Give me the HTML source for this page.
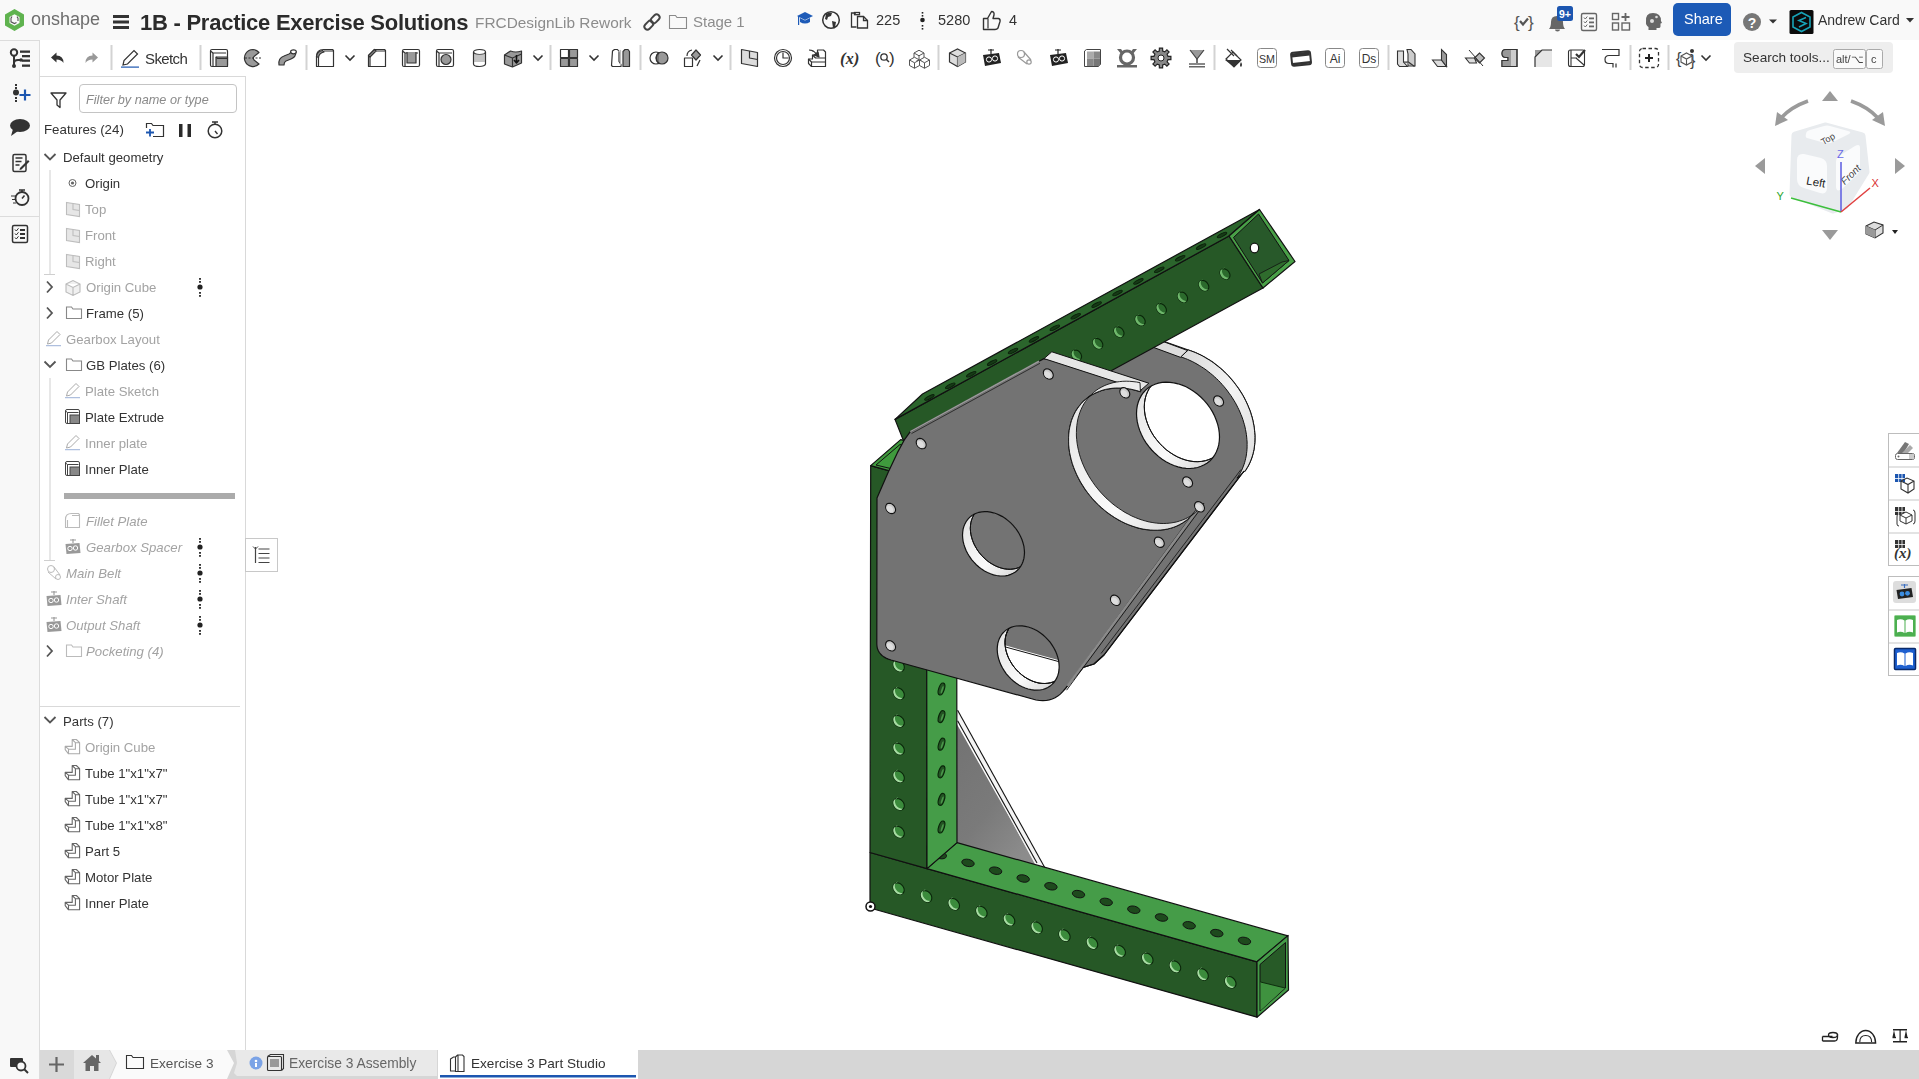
<!DOCTYPE html>
<html><head><meta charset="utf-8">
<style>
*{box-sizing:border-box;margin:0;padding:0}
html,body{width:1919px;height:1079px;overflow:hidden;background:#fff;font-family:"Liberation Sans",sans-serif;color:#333}
.a{position:absolute}
.t{position:absolute;white-space:nowrap;line-height:1;will-change:transform}
#hdr{left:0;top:0;width:1919px;height:40px;background:#f9f9f9}
#tb{left:40px;top:40px;width:1879px;height:37px;background:#fff}
#lstrip{left:0;top:40px;width:40px;height:1039px;background:#f8f8f8;border-right:1px solid #dcdcdc}
#fp{left:40px;top:76px;width:206px;height:974px;background:#fff;border-right:1px solid #d9d9d9;border-top:1px solid #d9d9d9}
#btm{left:40px;top:1050px;width:1879px;height:29px;background:#d6d6d6}
.sep{position:absolute;top:45px;width:2px;height:25px;background:#d4d4d4}
.fi{position:absolute;font-size:13.2px;line-height:1;white-space:nowrap;color:#333;will-change:transform}
.g{color:#a3a3a3}
.it{font-style:italic}
</style></head><body>
<div id="hdr" class="a"></div>
<div id="tb" class="a"></div>
<div id="lstrip" class="a"></div>
<div id="fp" class="a"></div>
<div id="btm" class="a"></div>
<svg class="a" style="left:0;top:0" width="1919" height="1079" viewBox="0 0 1919 1079"><defs>
<linearGradient id="wg" x1="0" y1="0" x2="1" y2="1"><stop offset="0" stop-color="#d8d8d8"/><stop offset="0.5" stop-color="#f4f4f4"/><stop offset="1" stop-color="#dcdcdc"/></linearGradient>
<linearGradient id="wg2" x1="0" y1="0" x2="1" y2="1"><stop offset="0" stop-color="#e2e2e2"/><stop offset="0.6" stop-color="#fafafa"/><stop offset="1" stop-color="#d0d0d0"/></linearGradient>
<linearGradient id="gg" x1="0" y1="0" x2="0.7" y2="1"><stop offset="0" stop-color="#727272"/><stop offset="0.6" stop-color="#7a7a7a"/><stop offset="1" stop-color="#8c8c8c"/></linearGradient>
</defs><path d="M900.0,615.0 L1060.0,664.0 L1083.0,667.5 L1094.0,664.0 L1104.0,655.0 L1244.0,471.0 L1244.7,471.3 L1246.0,469.6 L1247.1,467.8 L1248.2,466.0 L1249.2,464.0 L1250.1,462.1 L1250.9,460.1 L1251.7,458.0 L1252.4,455.9 L1253.0,453.7 L1253.5,451.5 L1254.0,449.3 L1254.3,447.0 L1254.6,444.7 L1254.8,442.4 L1254.9,440.0 L1254.9,437.6 L1254.9,435.2 L1254.7,432.7 L1254.5,430.3 L1254.2,427.8 L1253.8,425.3 L1253.3,422.8 L1252.8,420.3 L1252.2,417.8 L1251.4,415.3 L1250.7,412.8 L1249.8,410.3 L1248.8,407.9 L1247.8,405.4 L1246.7,402.9 L1245.5,400.5 L1244.3,398.1 L1243.0,395.7 L1241.6,393.4 L1240.1,391.0 L1238.6,388.7 L1237.0,386.5 L1235.4,384.3 L1233.7,382.1 L1231.9,379.9 L1230.1,377.9 L1228.3,375.8 L1226.3,373.8 L1224.4,371.9 L1222.3,370.0 L1220.3,368.2 L1218.2,366.5 L1216.0,364.8 L1213.9,363.1 L1211.7,361.6 L1209.4,360.1 L1207.1,358.7 L1204.8,357.3 L1202.5,356.0 L1200.2,354.8 L1197.8,353.7 L1195.4,352.6 L1193.1,351.7 L1190.7,350.8 L1188.3,350.0 L1140.0,333.0 L1050.0,352.0 L950.0,432.0 L900.0,480.0 Z" fill="#737373" stroke="#111" stroke-width="1.2" stroke-linejoin="round" />
<path d="M1188.3,350.0 L1190.7,350.8 L1193.1,351.7 L1195.4,352.6 L1197.8,353.7 L1200.2,354.8 L1202.5,356.0 L1204.8,357.3 L1207.1,358.7 L1209.4,360.1 L1211.7,361.6 L1213.9,363.1 L1216.0,364.8 L1218.2,366.5 L1220.3,368.2 L1222.3,370.0 L1224.4,371.9 L1226.3,373.8 L1228.3,375.8 L1230.1,377.9 L1231.9,379.9 L1233.7,382.1 L1235.4,384.3 L1237.0,386.5 L1238.6,388.7 L1240.1,391.0 L1241.6,393.4 L1243.0,395.7 L1244.3,398.1 L1245.5,400.5 L1246.7,402.9 L1247.8,405.4 L1248.8,407.9 L1249.8,410.3 L1250.7,412.8 L1251.4,415.3 L1252.2,417.8 L1252.8,420.3 L1253.3,422.8 L1253.8,425.3 L1254.2,427.8 L1254.5,430.3 L1254.7,432.7 L1254.9,435.2 L1254.9,437.6 L1254.9,440.0 L1254.8,442.4 L1254.6,444.7 L1254.3,447.0 L1254.0,449.3 L1253.5,451.5 L1253.0,453.7 L1252.4,455.9 L1251.7,458.0 L1250.9,460.1 L1250.1,462.1 L1249.2,464.0 L1248.2,466.0 L1247.1,467.8 L1246.0,469.6 L1244.7,471.3 L1236.9,478.1 L1238.2,476.4 L1239.3,474.6 L1240.4,472.8 L1241.4,470.8 L1242.3,468.9 L1243.1,466.9 L1243.9,464.8 L1244.6,462.7 L1245.2,460.5 L1245.7,458.3 L1246.2,456.1 L1246.5,453.8 L1246.8,451.5 L1247.0,449.2 L1247.1,446.8 L1247.1,444.4 L1247.1,442.0 L1246.9,439.5 L1246.7,437.1 L1246.4,434.6 L1246.0,432.1 L1245.5,429.6 L1245.0,427.1 L1244.4,424.6 L1243.6,422.1 L1242.9,419.6 L1242.0,417.1 L1241.0,414.7 L1240.0,412.2 L1238.9,409.7 L1237.7,407.3 L1236.5,404.9 L1235.2,402.5 L1233.8,400.2 L1232.3,397.8 L1230.8,395.5 L1229.2,393.3 L1227.6,391.1 L1225.9,388.9 L1224.1,386.7 L1222.3,384.7 L1220.5,382.6 L1218.5,380.6 L1216.6,378.7 L1214.5,376.8 L1212.5,375.0 L1210.4,373.3 L1208.2,371.6 L1206.1,369.9 L1203.9,368.4 L1201.6,366.9 L1199.3,365.5 L1197.0,364.1 L1194.7,362.8 L1192.4,361.6 L1190.0,360.5 L1187.6,359.4 L1185.3,358.5 L1182.9,357.6 L1180.5,356.8 Z" fill="url(#wg)" stroke="#111" stroke-width="1.0" stroke-linejoin="round" />
<polygon points="1140.0,333.0 1187.5,350.5 1180.4,357.3 1132.9,339.8" fill="#dcdcdc" stroke="#111" stroke-width="1.0" stroke-linejoin="round" />
<path d="M1065.0,689.0 L1083.0,667.5 L1094.0,664.0 L1104.0,655.0 L1244.0,471.0" fill="none" stroke="#111" stroke-width="1.2" stroke-linejoin="round" />
<path d="M1101.0,653.5 L1241.0,469.5" fill="none" stroke="#111" stroke-width="0.8" stroke-linejoin="round" />
<polygon points="1229.0,236.0 1263.0,288.0 1041.0,409.0 904.0,442.0 895.0,419.4" fill="#265826" stroke="#111" stroke-width="1.2" stroke-linejoin="round" />
<polygon points="1259.5,209.5 1229.0,236.0 895.0,419.4 922.5,394.0" fill="#2b652c" stroke="#111" stroke-width="1.2" stroke-linejoin="round" />
<polygon points="1259.5,209.5 1295.0,261.5 1263.0,288.0 1229.0,236.0" fill="#49a047" stroke="#111" stroke-width="1.2" stroke-linejoin="round" />
<polygon points="1258.5,214.0 1289.0,260.5 1262.5,283.0 1233.5,237.5" fill="#28592a" stroke="#111" stroke-width="1" stroke-linejoin="round" />
<polygon points="1289.0,260.5 1262.5,283.0 1259.0,274.0 1282.0,262.0" fill="#2f6c2d" stroke="#111" stroke-width="0.8" stroke-linejoin="round" />
<ellipse cx="1254.5" cy="248" rx="4.2" ry="4.8" fill="#fff" stroke="#111" stroke-width="1.2"/>
<path d="M1230.0,275.4 L1229.9,276.3 L1229.6,277.2 L1229.1,277.9 L1228.5,278.5 L1227.8,278.9 L1226.9,279.1 L1226.0,279.2 L1225.0,279.0 L1224.0,278.6 L1223.1,278.1 L1222.2,277.4 L1221.5,276.5 L1220.9,275.6 L1220.4,274.6 L1220.1,273.6 L1220.0,272.6 L1220.1,271.7 L1220.4,270.8 L1220.9,270.1 L1221.5,269.5 L1222.2,269.1 L1223.1,268.9 L1224.0,268.8 L1225.0,269.0 L1226.0,269.4 L1226.9,269.9 L1227.8,270.6 L1228.5,271.5 L1229.1,272.4 L1229.6,273.4 L1229.9,274.4 L1230.0,275.4 Z" fill="#2b6a2c" stroke="#0a260a" stroke-width="1.1" stroke-linejoin="round" />
<path d="M1227.3,279.1 L1226.7,279.2 L1226.0,279.2 L1225.4,279.1 L1224.7,278.9 L1224.1,278.6 L1223.5,278.3 L1222.9,277.9 L1222.3,277.4 L1221.8,276.9 L1221.3,276.3 L1220.9,275.7 L1220.6,275.0 L1220.3,274.3 L1220.1,273.7 L1220.0,273.0 L1220.0,272.3 L1220.1,271.7 L1220.3,271.1 L1220.5,270.6 L1220.8,270.1 L1221.2,269.7 L1221.7,269.4 L1222.2,269.1 L1222.7,268.9 L1224.7,267.4 L1224.2,267.6 L1223.7,267.9 L1223.2,268.2 L1222.8,268.6 L1222.5,269.1 L1222.3,269.6 L1222.1,270.2 L1222.0,270.8 L1222.0,271.5 L1222.1,272.2 L1222.3,272.8 L1222.6,273.5 L1222.9,274.2 L1223.3,274.8 L1223.8,275.4 L1224.3,275.9 L1224.9,276.4 L1225.5,276.8 L1226.1,277.1 L1226.7,277.4 L1227.4,277.6 L1228.0,277.7 L1228.7,277.7 L1229.3,277.6 Z" fill="#6fb86c" stroke="none" stroke-width="1.2" stroke-linejoin="round" />
<path d="M1208.8,287.0 L1208.7,287.9 L1208.4,288.8 L1207.9,289.5 L1207.3,290.1 L1206.6,290.5 L1205.7,290.7 L1204.8,290.8 L1203.8,290.6 L1202.8,290.2 L1201.9,289.7 L1201.0,289.0 L1200.3,288.1 L1199.7,287.2 L1199.2,286.2 L1198.9,285.2 L1198.8,284.2 L1198.9,283.3 L1199.2,282.4 L1199.7,281.7 L1200.3,281.1 L1201.0,280.7 L1201.9,280.5 L1202.8,280.4 L1203.8,280.6 L1204.8,281.0 L1205.7,281.5 L1206.6,282.2 L1207.3,283.1 L1207.9,284.0 L1208.4,285.0 L1208.7,286.0 L1208.8,287.0 Z" fill="#2b6a2c" stroke="#0a260a" stroke-width="1.1" stroke-linejoin="round" />
<path d="M1206.1,290.7 L1205.5,290.8 L1204.8,290.8 L1204.2,290.7 L1203.5,290.5 L1202.9,290.2 L1202.3,289.9 L1201.7,289.5 L1201.1,289.0 L1200.6,288.5 L1200.1,287.9 L1199.7,287.3 L1199.4,286.6 L1199.1,285.9 L1198.9,285.3 L1198.8,284.6 L1198.8,283.9 L1198.9,283.3 L1199.1,282.7 L1199.3,282.2 L1199.6,281.7 L1200.0,281.3 L1200.5,281.0 L1201.0,280.7 L1201.5,280.5 L1203.5,279.0 L1203.0,279.2 L1202.5,279.5 L1202.0,279.8 L1201.6,280.2 L1201.3,280.7 L1201.1,281.2 L1200.9,281.8 L1200.8,282.4 L1200.8,283.1 L1200.9,283.8 L1201.1,284.4 L1201.4,285.1 L1201.7,285.8 L1202.1,286.4 L1202.6,287.0 L1203.1,287.5 L1203.7,288.0 L1204.3,288.4 L1204.9,288.7 L1205.5,289.0 L1206.2,289.2 L1206.8,289.3 L1207.5,289.3 L1208.1,289.2 Z" fill="#6fb86c" stroke="none" stroke-width="1.2" stroke-linejoin="round" />
<path d="M1187.6,298.6 L1187.5,299.5 L1187.2,300.4 L1186.7,301.1 L1186.1,301.7 L1185.4,302.1 L1184.5,302.3 L1183.6,302.4 L1182.6,302.2 L1181.6,301.8 L1180.7,301.3 L1179.8,300.6 L1179.1,299.7 L1178.5,298.8 L1178.0,297.8 L1177.7,296.8 L1177.6,295.8 L1177.7,294.9 L1178.0,294.0 L1178.5,293.3 L1179.1,292.7 L1179.8,292.3 L1180.7,292.1 L1181.6,292.0 L1182.6,292.2 L1183.6,292.6 L1184.5,293.1 L1185.4,293.8 L1186.1,294.7 L1186.7,295.6 L1187.2,296.6 L1187.5,297.6 L1187.6,298.6 Z" fill="#2b6a2c" stroke="#0a260a" stroke-width="1.1" stroke-linejoin="round" />
<path d="M1184.9,302.3 L1184.3,302.4 L1183.6,302.4 L1183.0,302.3 L1182.3,302.1 L1181.7,301.8 L1181.1,301.5 L1180.5,301.1 L1179.9,300.6 L1179.4,300.1 L1178.9,299.5 L1178.5,298.9 L1178.2,298.2 L1177.9,297.5 L1177.7,296.9 L1177.6,296.2 L1177.6,295.5 L1177.7,294.9 L1177.9,294.3 L1178.1,293.8 L1178.4,293.3 L1178.8,292.9 L1179.3,292.6 L1179.8,292.3 L1180.3,292.1 L1182.3,290.6 L1181.8,290.8 L1181.3,291.1 L1180.8,291.4 L1180.4,291.8 L1180.1,292.3 L1179.9,292.8 L1179.7,293.4 L1179.6,294.0 L1179.6,294.7 L1179.7,295.4 L1179.9,296.0 L1180.2,296.7 L1180.5,297.4 L1180.9,298.0 L1181.4,298.6 L1181.9,299.1 L1182.5,299.6 L1183.1,300.0 L1183.7,300.3 L1184.3,300.6 L1185.0,300.8 L1185.6,300.9 L1186.3,300.9 L1186.9,300.8 Z" fill="#6fb86c" stroke="none" stroke-width="1.2" stroke-linejoin="round" />
<path d="M1166.4,310.2 L1166.3,311.1 L1166.0,312.0 L1165.5,312.7 L1164.9,313.3 L1164.2,313.7 L1163.3,313.9 L1162.4,314.0 L1161.4,313.8 L1160.4,313.4 L1159.5,312.9 L1158.6,312.2 L1157.9,311.3 L1157.3,310.4 L1156.8,309.4 L1156.5,308.4 L1156.4,307.4 L1156.5,306.5 L1156.8,305.6 L1157.3,304.9 L1157.9,304.3 L1158.6,303.9 L1159.5,303.7 L1160.4,303.6 L1161.4,303.8 L1162.4,304.2 L1163.3,304.7 L1164.2,305.4 L1164.9,306.3 L1165.5,307.2 L1166.0,308.2 L1166.3,309.2 L1166.4,310.2 Z" fill="#2b6a2c" stroke="#0a260a" stroke-width="1.1" stroke-linejoin="round" />
<path d="M1163.7,313.9 L1163.1,314.0 L1162.4,314.0 L1161.8,313.9 L1161.1,313.7 L1160.5,313.4 L1159.9,313.1 L1159.3,312.7 L1158.7,312.2 L1158.2,311.7 L1157.7,311.1 L1157.3,310.5 L1157.0,309.8 L1156.7,309.1 L1156.5,308.5 L1156.4,307.8 L1156.4,307.1 L1156.5,306.5 L1156.7,305.9 L1156.9,305.4 L1157.2,304.9 L1157.6,304.5 L1158.1,304.2 L1158.6,303.9 L1159.1,303.7 L1161.1,302.2 L1160.6,302.4 L1160.1,302.7 L1159.6,303.0 L1159.2,303.4 L1158.9,303.9 L1158.7,304.4 L1158.5,305.0 L1158.4,305.6 L1158.4,306.3 L1158.5,307.0 L1158.7,307.6 L1159.0,308.3 L1159.3,309.0 L1159.7,309.6 L1160.2,310.2 L1160.7,310.7 L1161.3,311.2 L1161.9,311.6 L1162.5,311.9 L1163.1,312.2 L1163.8,312.4 L1164.4,312.5 L1165.1,312.5 L1165.7,312.4 Z" fill="#6fb86c" stroke="none" stroke-width="1.2" stroke-linejoin="round" />
<path d="M1145.2,321.8 L1145.1,322.7 L1144.8,323.6 L1144.3,324.3 L1143.7,324.9 L1143.0,325.3 L1142.1,325.5 L1141.2,325.6 L1140.2,325.4 L1139.2,325.0 L1138.3,324.5 L1137.4,323.8 L1136.7,322.9 L1136.1,322.0 L1135.6,321.0 L1135.3,320.0 L1135.2,319.0 L1135.3,318.1 L1135.6,317.2 L1136.1,316.5 L1136.7,315.9 L1137.4,315.5 L1138.3,315.3 L1139.2,315.2 L1140.2,315.4 L1141.2,315.8 L1142.1,316.3 L1143.0,317.0 L1143.7,317.9 L1144.3,318.8 L1144.8,319.8 L1145.1,320.8 L1145.2,321.8 Z" fill="#2b6a2c" stroke="#0a260a" stroke-width="1.1" stroke-linejoin="round" />
<path d="M1142.5,325.5 L1141.9,325.6 L1141.2,325.6 L1140.6,325.5 L1139.9,325.3 L1139.3,325.0 L1138.7,324.7 L1138.1,324.3 L1137.5,323.8 L1137.0,323.3 L1136.5,322.7 L1136.1,322.1 L1135.8,321.4 L1135.5,320.7 L1135.3,320.1 L1135.2,319.4 L1135.2,318.7 L1135.3,318.1 L1135.5,317.5 L1135.7,317.0 L1136.0,316.5 L1136.4,316.1 L1136.9,315.8 L1137.4,315.5 L1137.9,315.3 L1139.9,313.8 L1139.4,314.0 L1138.9,314.3 L1138.4,314.6 L1138.0,315.0 L1137.7,315.5 L1137.5,316.0 L1137.3,316.6 L1137.2,317.2 L1137.2,317.9 L1137.3,318.6 L1137.5,319.2 L1137.8,319.9 L1138.1,320.6 L1138.5,321.2 L1139.0,321.8 L1139.5,322.3 L1140.1,322.8 L1140.7,323.2 L1141.3,323.5 L1141.9,323.8 L1142.6,324.0 L1143.2,324.1 L1143.9,324.1 L1144.5,324.0 Z" fill="#6fb86c" stroke="none" stroke-width="1.2" stroke-linejoin="round" />
<path d="M1124.0,333.4 L1123.9,334.3 L1123.6,335.2 L1123.1,335.9 L1122.5,336.5 L1121.8,336.9 L1120.9,337.1 L1120.0,337.2 L1119.0,337.0 L1118.0,336.6 L1117.1,336.1 L1116.2,335.4 L1115.5,334.5 L1114.9,333.6 L1114.4,332.6 L1114.1,331.6 L1114.0,330.6 L1114.1,329.7 L1114.4,328.8 L1114.9,328.1 L1115.5,327.5 L1116.2,327.1 L1117.1,326.9 L1118.0,326.8 L1119.0,327.0 L1120.0,327.4 L1120.9,327.9 L1121.8,328.6 L1122.5,329.5 L1123.1,330.4 L1123.6,331.4 L1123.9,332.4 L1124.0,333.4 Z" fill="#2b6a2c" stroke="#0a260a" stroke-width="1.1" stroke-linejoin="round" />
<path d="M1121.3,337.1 L1120.7,337.2 L1120.0,337.2 L1119.4,337.1 L1118.7,336.9 L1118.1,336.6 L1117.5,336.3 L1116.9,335.9 L1116.3,335.4 L1115.8,334.9 L1115.3,334.3 L1114.9,333.7 L1114.6,333.0 L1114.3,332.3 L1114.1,331.7 L1114.0,331.0 L1114.0,330.3 L1114.1,329.7 L1114.3,329.1 L1114.5,328.6 L1114.8,328.1 L1115.2,327.7 L1115.7,327.4 L1116.2,327.1 L1116.7,326.9 L1118.7,325.4 L1118.2,325.6 L1117.7,325.9 L1117.2,326.2 L1116.8,326.6 L1116.5,327.1 L1116.3,327.6 L1116.1,328.2 L1116.0,328.8 L1116.0,329.5 L1116.1,330.2 L1116.3,330.8 L1116.6,331.5 L1116.9,332.2 L1117.3,332.8 L1117.8,333.4 L1118.3,333.9 L1118.9,334.4 L1119.5,334.8 L1120.1,335.1 L1120.7,335.4 L1121.4,335.6 L1122.0,335.7 L1122.7,335.7 L1123.3,335.6 Z" fill="#6fb86c" stroke="none" stroke-width="1.2" stroke-linejoin="round" />
<path d="M1102.8,345.0 L1102.7,345.9 L1102.4,346.8 L1101.9,347.5 L1101.3,348.1 L1100.6,348.5 L1099.7,348.7 L1098.8,348.8 L1097.8,348.6 L1096.8,348.2 L1095.9,347.7 L1095.0,347.0 L1094.3,346.1 L1093.7,345.2 L1093.2,344.2 L1092.9,343.2 L1092.8,342.2 L1092.9,341.3 L1093.2,340.4 L1093.7,339.7 L1094.3,339.1 L1095.0,338.7 L1095.9,338.5 L1096.8,338.4 L1097.8,338.6 L1098.8,339.0 L1099.7,339.5 L1100.6,340.2 L1101.3,341.1 L1101.9,342.0 L1102.4,343.0 L1102.7,344.0 L1102.8,345.0 Z" fill="#2b6a2c" stroke="#0a260a" stroke-width="1.1" stroke-linejoin="round" />
<path d="M1100.1,348.7 L1099.5,348.8 L1098.8,348.8 L1098.2,348.7 L1097.5,348.5 L1096.9,348.2 L1096.3,347.9 L1095.7,347.5 L1095.1,347.0 L1094.6,346.5 L1094.1,345.9 L1093.7,345.3 L1093.4,344.6 L1093.1,343.9 L1092.9,343.3 L1092.8,342.6 L1092.8,341.9 L1092.9,341.3 L1093.1,340.7 L1093.3,340.2 L1093.6,339.7 L1094.0,339.3 L1094.5,339.0 L1095.0,338.7 L1095.5,338.5 L1097.5,337.0 L1097.0,337.2 L1096.5,337.5 L1096.0,337.8 L1095.6,338.2 L1095.3,338.7 L1095.1,339.2 L1094.9,339.8 L1094.8,340.4 L1094.8,341.1 L1094.9,341.8 L1095.1,342.4 L1095.4,343.1 L1095.7,343.8 L1096.1,344.4 L1096.6,345.0 L1097.1,345.5 L1097.7,346.0 L1098.3,346.4 L1098.9,346.7 L1099.5,347.0 L1100.2,347.2 L1100.8,347.3 L1101.5,347.3 L1102.1,347.2 Z" fill="#6fb86c" stroke="none" stroke-width="1.2" stroke-linejoin="round" />
<path d="M1081.6,356.6 L1081.5,357.5 L1081.2,358.4 L1080.7,359.1 L1080.1,359.7 L1079.4,360.1 L1078.5,360.3 L1077.6,360.4 L1076.6,360.2 L1075.6,359.8 L1074.7,359.3 L1073.8,358.6 L1073.1,357.7 L1072.5,356.8 L1072.0,355.8 L1071.7,354.8 L1071.6,353.8 L1071.7,352.9 L1072.0,352.0 L1072.5,351.3 L1073.1,350.7 L1073.8,350.3 L1074.7,350.1 L1075.6,350.0 L1076.6,350.2 L1077.6,350.6 L1078.5,351.1 L1079.4,351.8 L1080.1,352.7 L1080.7,353.6 L1081.2,354.6 L1081.5,355.6 L1081.6,356.6 Z" fill="#2b6a2c" stroke="#0a260a" stroke-width="1.1" stroke-linejoin="round" />
<path d="M1078.9,360.3 L1078.3,360.4 L1077.6,360.4 L1077.0,360.3 L1076.3,360.1 L1075.7,359.8 L1075.1,359.5 L1074.5,359.1 L1073.9,358.6 L1073.4,358.1 L1072.9,357.5 L1072.5,356.9 L1072.2,356.2 L1071.9,355.5 L1071.7,354.9 L1071.6,354.2 L1071.6,353.5 L1071.7,352.9 L1071.9,352.3 L1072.1,351.8 L1072.4,351.3 L1072.8,350.9 L1073.3,350.6 L1073.8,350.3 L1074.3,350.1 L1076.3,348.6 L1075.8,348.8 L1075.3,349.1 L1074.8,349.4 L1074.4,349.8 L1074.1,350.3 L1073.9,350.8 L1073.7,351.4 L1073.6,352.0 L1073.6,352.7 L1073.7,353.4 L1073.9,354.0 L1074.2,354.7 L1074.5,355.4 L1074.9,356.0 L1075.4,356.6 L1075.9,357.1 L1076.5,357.6 L1077.1,358.0 L1077.7,358.3 L1078.3,358.6 L1079.0,358.8 L1079.6,358.9 L1080.3,358.9 L1080.9,358.8 Z" fill="#6fb86c" stroke="none" stroke-width="1.2" stroke-linejoin="round" />
<ellipse cx="1222.0" cy="235.0" rx="5.3" ry="1.5" transform="rotate(-27 1222.0 235.0)" fill="#163a16" stroke="#0a1f0a" stroke-width="0.9"/>
<ellipse cx="1201.1" cy="246.6" rx="5.3" ry="1.5" transform="rotate(-27 1201.1 246.6)" fill="#163a16" stroke="#0a1f0a" stroke-width="0.9"/>
<ellipse cx="1180.2" cy="258.2" rx="5.3" ry="1.5" transform="rotate(-27 1180.2 258.2)" fill="#163a16" stroke="#0a1f0a" stroke-width="0.9"/>
<ellipse cx="1159.3" cy="269.8" rx="5.3" ry="1.5" transform="rotate(-27 1159.3 269.8)" fill="#163a16" stroke="#0a1f0a" stroke-width="0.9"/>
<ellipse cx="1138.4" cy="281.4" rx="5.3" ry="1.5" transform="rotate(-27 1138.4 281.4)" fill="#163a16" stroke="#0a1f0a" stroke-width="0.9"/>
<ellipse cx="1117.5" cy="293.0" rx="5.3" ry="1.5" transform="rotate(-27 1117.5 293.0)" fill="#163a16" stroke="#0a1f0a" stroke-width="0.9"/>
<ellipse cx="1096.6" cy="304.6" rx="5.3" ry="1.5" transform="rotate(-27 1096.6 304.6)" fill="#163a16" stroke="#0a1f0a" stroke-width="0.9"/>
<ellipse cx="1075.7" cy="316.2" rx="5.3" ry="1.5" transform="rotate(-27 1075.7 316.2)" fill="#163a16" stroke="#0a1f0a" stroke-width="0.9"/>
<ellipse cx="1054.8" cy="327.8" rx="5.3" ry="1.5" transform="rotate(-27 1054.8 327.8)" fill="#163a16" stroke="#0a1f0a" stroke-width="0.9"/>
<ellipse cx="1033.9" cy="339.4" rx="5.3" ry="1.5" transform="rotate(-27 1033.9 339.4)" fill="#163a16" stroke="#0a1f0a" stroke-width="0.9"/>
<ellipse cx="1013.0" cy="351.0" rx="5.3" ry="1.5" transform="rotate(-27 1013.0 351.0)" fill="#163a16" stroke="#0a1f0a" stroke-width="0.9"/>
<ellipse cx="992.1" cy="362.6" rx="5.3" ry="1.5" transform="rotate(-27 992.1 362.6)" fill="#163a16" stroke="#0a1f0a" stroke-width="0.9"/>
<ellipse cx="971.2" cy="374.2" rx="5.3" ry="1.5" transform="rotate(-27 971.2 374.2)" fill="#163a16" stroke="#0a1f0a" stroke-width="0.9"/>
<ellipse cx="950.3" cy="385.8" rx="5.3" ry="1.5" transform="rotate(-27 950.3 385.8)" fill="#163a16" stroke="#0a1f0a" stroke-width="0.9"/>
<ellipse cx="929.4" cy="397.4" rx="5.3" ry="1.5" transform="rotate(-27 929.4 397.4)" fill="#163a16" stroke="#0a1f0a" stroke-width="0.9"/>
<polygon points="955.0,720.8 1038.0,868.0 955.0,845.0" fill="url(#gg)" stroke="none" stroke-width="1.2" stroke-linejoin="round" />
<polygon points="955.0,706.0 957.6,710.3 1045.0,868.0 1037.0,868.0 957.6,720.8 955.0,717.0" fill="#f4f4f4" stroke="none" stroke-width="1.2" stroke-linejoin="round" />
<path d="M957.6,710.3 L1045.0,868.0" fill="none" stroke="#111" stroke-width="1.1" stroke-linejoin="round" />
<path d="M957.6,720.8 L1037.0,863.0" fill="none" stroke="#111" stroke-width="1.1" stroke-linejoin="round" />
<polygon points="870.0,852.5 1257.0,961.8 1257.0,1017.2 870.0,908.0" fill="#265826" stroke="#111" stroke-width="1.2" stroke-linejoin="round" />
<polygon points="927.0,868.6 957.0,842.6 1288.0,935.9 1257.0,961.8" fill="#459c48" stroke="#111" stroke-width="1.2" stroke-linejoin="round" />
<polygon points="1257.0,961.8 1288.0,935.5 1288.5,990.0 1257.0,1017.2" fill="#459c48" stroke="#111" stroke-width="1.2" stroke-linejoin="round" />
<polygon points="1260.0,964.5 1285.5,942.5 1285.5,988.0 1260.0,1011.0" fill="#275a27" stroke="#111" stroke-width="1" stroke-linejoin="round" />
<polygon points="1260.5,982.0 1285.0,988.0 1260.5,1010.5" fill="#3f923f" stroke="none" stroke-width="1.2" stroke-linejoin="round" />
<path d="M1260.5,982.0 L1285.0,988.0" fill="none" stroke="#0a260a" stroke-width="0.9" stroke-linejoin="round" />
<path d="M904.2,890.2 L904.1,891.2 L903.8,892.2 L903.2,893.0 L902.6,893.6 L901.7,894.1 L900.8,894.3 L899.7,894.3 L898.6,894.1 L897.6,893.7 L896.5,893.1 L895.6,892.3 L894.7,891.4 L894.1,890.4 L893.5,889.3 L893.2,888.2 L893.1,887.0 L893.2,886.0 L893.5,885.0 L894.1,884.2 L894.7,883.6 L895.6,883.1 L896.5,882.9 L897.6,882.9 L898.6,883.1 L899.7,883.5 L900.8,884.1 L901.7,884.9 L902.6,885.8 L903.2,886.8 L903.8,887.9 L904.1,889.0 L904.2,890.2 Z" fill="#3b8b3c" stroke="#0a260a" stroke-width="1.1" stroke-linejoin="round" /><path d="M901.2,894.2 L900.7,894.3 L900.2,894.4 L899.6,894.3 L899.1,894.2 L898.5,894.1 L898.0,893.9 L897.5,893.7 L896.9,893.4 L896.4,893.1 L895.9,892.7 L895.5,892.3 L895.1,891.8 L894.7,891.3 L894.3,890.8 L894.0,890.3 L893.7,889.7 L893.5,889.2 L893.3,888.6 L893.2,888.0 L893.1,887.5 L893.1,886.9 L893.2,886.4 L893.2,885.9 L893.4,885.4 L893.6,885.0 L893.8,884.5 L894.1,884.2 L894.4,883.8 L894.8,883.5 L895.2,883.3 L895.7,883.1 L896.1,883.0 L897.8,881.7 L897.4,881.8 L896.9,882.0 L896.5,882.2 L896.1,882.5 L895.8,882.9 L895.5,883.2 L895.3,883.7 L895.1,884.1 L894.9,884.6 L894.9,885.1 L894.8,885.6 L894.8,886.2 L894.9,886.7 L895.0,887.3 L895.2,887.9 L895.4,888.4 L895.7,889.0 L896.0,889.5 L896.4,890.0 L896.8,890.5 L897.2,891.0 L897.6,891.4 L898.1,891.8 L898.6,892.1 L899.2,892.4 L899.7,892.6 L900.2,892.8 L900.8,892.9 L901.3,893.0 L901.9,893.1 L902.4,893.0 L902.9,892.9 Z" fill="#a6dca2" stroke="none" stroke-width="1.2" stroke-linejoin="round" />
<path d="M931.8,898.0 L931.7,899.0 L931.4,900.0 L930.9,900.8 L930.2,901.4 L929.4,901.9 L928.4,902.1 L927.4,902.1 L926.3,901.9 L925.2,901.5 L924.2,900.9 L923.2,900.1 L922.4,899.2 L921.7,898.2 L921.2,897.1 L920.9,896.0 L920.8,894.8 L920.9,893.8 L921.2,892.8 L921.7,892.0 L922.4,891.4 L923.2,890.9 L924.2,890.7 L925.2,890.7 L926.3,890.9 L927.4,891.3 L928.4,891.9 L929.4,892.7 L930.2,893.6 L930.9,894.6 L931.4,895.7 L931.7,896.8 L931.8,898.0 Z" fill="#3b8b3c" stroke="#0a260a" stroke-width="1.1" stroke-linejoin="round" /><path d="M928.8,902.0 L928.3,902.1 L927.8,902.2 L927.3,902.1 L926.7,902.0 L926.2,901.9 L925.7,901.7 L925.1,901.5 L924.6,901.2 L924.1,900.9 L923.6,900.5 L923.1,900.1 L922.7,899.6 L922.3,899.1 L922.0,898.6 L921.6,898.1 L921.4,897.5 L921.2,897.0 L921.0,896.4 L920.9,895.8 L920.8,895.3 L920.8,894.7 L920.8,894.2 L920.9,893.7 L921.0,893.2 L921.2,892.8 L921.5,892.3 L921.8,892.0 L922.1,891.6 L922.5,891.3 L922.9,891.1 L923.3,890.9 L923.8,890.8 L925.5,889.5 L925.0,889.6 L924.6,889.8 L924.2,890.0 L923.8,890.3 L923.5,890.7 L923.2,891.0 L922.9,891.5 L922.7,891.9 L922.6,892.4 L922.5,892.9 L922.5,893.4 L922.5,894.0 L922.6,894.5 L922.7,895.1 L922.9,895.7 L923.1,896.2 L923.3,896.8 L923.7,897.3 L924.0,897.8 L924.4,898.3 L924.8,898.8 L925.3,899.2 L925.8,899.6 L926.3,899.9 L926.8,900.2 L927.4,900.4 L927.9,900.6 L928.4,900.7 L929.0,900.8 L929.5,900.9 L930.0,900.8 L930.5,900.7 Z" fill="#a6dca2" stroke="none" stroke-width="1.2" stroke-linejoin="round" />
<path d="M959.5,905.8 L959.4,906.8 L959.1,907.8 L958.5,908.6 L957.9,909.2 L957.0,909.7 L956.1,909.9 L955.0,909.9 L954.0,909.7 L952.9,909.3 L951.8,908.7 L950.9,907.9 L950.0,907.0 L949.4,906.0 L948.8,904.9 L948.5,903.8 L948.4,902.6 L948.5,901.6 L948.8,900.6 L949.4,899.8 L950.0,899.2 L950.9,898.7 L951.8,898.5 L952.9,898.5 L954.0,898.7 L955.0,899.1 L956.1,899.7 L957.0,900.5 L957.9,901.4 L958.5,902.4 L959.1,903.5 L959.4,904.6 L959.5,905.8 Z" fill="#3b8b3c" stroke="#0a260a" stroke-width="1.1" stroke-linejoin="round" /><path d="M956.5,909.8 L956.0,909.9 L955.5,910.0 L954.9,909.9 L954.4,909.8 L953.8,909.7 L953.3,909.5 L952.8,909.3 L952.2,909.0 L951.7,908.7 L951.2,908.3 L950.8,907.9 L950.4,907.4 L950.0,906.9 L949.6,906.4 L949.3,905.9 L949.0,905.3 L948.8,904.8 L948.6,904.2 L948.5,903.6 L948.4,903.1 L948.4,902.5 L948.5,902.0 L948.5,901.5 L948.7,901.0 L948.9,900.6 L949.1,900.1 L949.4,899.8 L949.7,899.4 L950.1,899.1 L950.5,898.9 L951.0,898.7 L951.4,898.6 L953.1,897.3 L952.7,897.4 L952.2,897.6 L951.8,897.8 L951.4,898.1 L951.1,898.5 L950.8,898.8 L950.6,899.3 L950.4,899.7 L950.2,900.2 L950.2,900.7 L950.1,901.2 L950.1,901.8 L950.2,902.3 L950.3,902.9 L950.5,903.5 L950.7,904.0 L951.0,904.6 L951.3,905.1 L951.7,905.6 L952.1,906.1 L952.5,906.6 L952.9,907.0 L953.4,907.4 L953.9,907.7 L954.5,908.0 L955.0,908.2 L955.5,908.4 L956.1,908.5 L956.6,908.6 L957.2,908.7 L957.7,908.6 L958.2,908.5 Z" fill="#a6dca2" stroke="none" stroke-width="1.2" stroke-linejoin="round" />
<path d="M987.1,913.6 L987.0,914.6 L986.7,915.6 L986.2,916.4 L985.5,917.0 L984.7,917.5 L983.7,917.7 L982.7,917.7 L981.6,917.5 L980.5,917.1 L979.5,916.5 L978.5,915.7 L977.7,914.8 L977.0,913.8 L976.5,912.7 L976.2,911.6 L976.1,910.4 L976.2,909.4 L976.5,908.4 L977.0,907.6 L977.7,907.0 L978.5,906.5 L979.5,906.3 L980.5,906.3 L981.6,906.5 L982.7,906.9 L983.7,907.5 L984.7,908.3 L985.5,909.2 L986.2,910.2 L986.7,911.3 L987.0,912.4 L987.1,913.6 Z" fill="#3b8b3c" stroke="#0a260a" stroke-width="1.1" stroke-linejoin="round" /><path d="M984.1,917.6 L983.6,917.7 L983.1,917.8 L982.6,917.7 L982.0,917.6 L981.5,917.5 L981.0,917.3 L980.4,917.1 L979.9,916.8 L979.4,916.5 L978.9,916.1 L978.4,915.7 L978.0,915.2 L977.6,914.7 L977.3,914.2 L976.9,913.7 L976.7,913.1 L976.5,912.6 L976.3,912.0 L976.2,911.4 L976.1,910.9 L976.1,910.3 L976.1,909.8 L976.2,909.3 L976.3,908.8 L976.5,908.4 L976.8,907.9 L977.1,907.6 L977.4,907.2 L977.8,906.9 L978.2,906.7 L978.6,906.5 L979.1,906.4 L980.8,905.1 L980.3,905.2 L979.9,905.4 L979.5,905.6 L979.1,905.9 L978.8,906.3 L978.5,906.6 L978.2,907.1 L978.0,907.5 L977.9,908.0 L977.8,908.5 L977.8,909.0 L977.8,909.6 L977.9,910.1 L978.0,910.7 L978.2,911.3 L978.4,911.8 L978.6,912.4 L979.0,912.9 L979.3,913.4 L979.7,913.9 L980.1,914.4 L980.6,914.8 L981.1,915.2 L981.6,915.5 L982.1,915.8 L982.7,916.0 L983.2,916.2 L983.7,916.3 L984.3,916.4 L984.8,916.5 L985.3,916.4 L985.8,916.3 Z" fill="#a6dca2" stroke="none" stroke-width="1.2" stroke-linejoin="round" />
<path d="M1014.8,921.4 L1014.7,922.4 L1014.4,923.4 L1013.8,924.2 L1013.2,924.8 L1012.3,925.3 L1011.4,925.5 L1010.3,925.5 L1009.2,925.3 L1008.2,924.9 L1007.1,924.3 L1006.2,923.5 L1005.3,922.6 L1004.7,921.6 L1004.1,920.5 L1003.8,919.4 L1003.7,918.2 L1003.8,917.2 L1004.1,916.2 L1004.7,915.4 L1005.3,914.8 L1006.2,914.3 L1007.1,914.1 L1008.2,914.1 L1009.2,914.3 L1010.3,914.7 L1011.4,915.3 L1012.3,916.1 L1013.2,917.0 L1013.8,918.0 L1014.4,919.1 L1014.7,920.2 L1014.8,921.4 Z" fill="#3b8b3c" stroke="#0a260a" stroke-width="1.1" stroke-linejoin="round" /><path d="M1011.8,925.4 L1011.3,925.5 L1010.8,925.6 L1010.2,925.5 L1009.7,925.4 L1009.1,925.3 L1008.6,925.1 L1008.1,924.9 L1007.5,924.6 L1007.0,924.3 L1006.5,923.9 L1006.1,923.5 L1005.7,923.0 L1005.3,922.5 L1004.9,922.0 L1004.6,921.5 L1004.3,920.9 L1004.1,920.4 L1003.9,919.8 L1003.8,919.2 L1003.7,918.7 L1003.7,918.1 L1003.8,917.6 L1003.8,917.1 L1004.0,916.6 L1004.2,916.2 L1004.4,915.7 L1004.7,915.4 L1005.0,915.0 L1005.4,914.7 L1005.8,914.5 L1006.3,914.3 L1006.7,914.2 L1008.4,912.9 L1008.0,913.0 L1007.5,913.2 L1007.1,913.4 L1006.7,913.7 L1006.4,914.1 L1006.1,914.4 L1005.9,914.9 L1005.7,915.3 L1005.5,915.8 L1005.5,916.3 L1005.4,916.8 L1005.4,917.4 L1005.5,917.9 L1005.6,918.5 L1005.8,919.1 L1006.0,919.6 L1006.3,920.2 L1006.6,920.7 L1007.0,921.2 L1007.4,921.7 L1007.8,922.2 L1008.2,922.6 L1008.7,923.0 L1009.2,923.3 L1009.8,923.6 L1010.3,923.8 L1010.8,924.0 L1011.4,924.1 L1011.9,924.2 L1012.5,924.3 L1013.0,924.2 L1013.5,924.1 Z" fill="#a6dca2" stroke="none" stroke-width="1.2" stroke-linejoin="round" />
<path d="M1042.4,929.2 L1042.3,930.2 L1042.0,931.2 L1041.5,932.0 L1040.8,932.6 L1040.0,933.1 L1039.0,933.3 L1038.0,933.3 L1036.9,933.1 L1035.8,932.7 L1034.8,932.1 L1033.8,931.3 L1033.0,930.4 L1032.3,929.4 L1031.8,928.3 L1031.5,927.2 L1031.4,926.0 L1031.5,925.0 L1031.8,924.0 L1032.3,923.2 L1033.0,922.6 L1033.8,922.1 L1034.8,921.9 L1035.8,921.9 L1036.9,922.1 L1038.0,922.5 L1039.0,923.1 L1040.0,923.9 L1040.8,924.8 L1041.5,925.8 L1042.0,926.9 L1042.3,928.0 L1042.4,929.2 Z" fill="#3b8b3c" stroke="#0a260a" stroke-width="1.1" stroke-linejoin="round" /><path d="M1039.4,933.2 L1038.9,933.3 L1038.4,933.4 L1037.9,933.3 L1037.3,933.2 L1036.8,933.1 L1036.3,932.9 L1035.7,932.7 L1035.2,932.4 L1034.7,932.1 L1034.2,931.7 L1033.7,931.3 L1033.3,930.8 L1032.9,930.3 L1032.6,929.8 L1032.2,929.3 L1032.0,928.7 L1031.8,928.2 L1031.6,927.6 L1031.5,927.0 L1031.4,926.5 L1031.4,925.9 L1031.4,925.4 L1031.5,924.9 L1031.6,924.4 L1031.8,924.0 L1032.1,923.5 L1032.4,923.2 L1032.7,922.8 L1033.1,922.5 L1033.5,922.3 L1033.9,922.1 L1034.4,922.0 L1036.1,920.7 L1035.6,920.8 L1035.2,921.0 L1034.8,921.2 L1034.4,921.5 L1034.1,921.9 L1033.8,922.2 L1033.5,922.7 L1033.3,923.1 L1033.2,923.6 L1033.1,924.1 L1033.1,924.6 L1033.1,925.2 L1033.2,925.7 L1033.3,926.3 L1033.5,926.9 L1033.7,927.4 L1033.9,928.0 L1034.3,928.5 L1034.6,929.0 L1035.0,929.5 L1035.4,930.0 L1035.9,930.4 L1036.4,930.8 L1036.9,931.1 L1037.4,931.4 L1038.0,931.6 L1038.5,931.8 L1039.0,931.9 L1039.6,932.0 L1040.1,932.1 L1040.6,932.0 L1041.1,931.9 Z" fill="#a6dca2" stroke="none" stroke-width="1.2" stroke-linejoin="round" />
<path d="M1070.1,937.0 L1070.0,938.0 L1069.7,939.0 L1069.1,939.8 L1068.5,940.4 L1067.6,940.9 L1066.7,941.1 L1065.6,941.1 L1064.5,940.9 L1063.5,940.5 L1062.4,939.9 L1061.5,939.1 L1060.6,938.2 L1060.0,937.2 L1059.4,936.1 L1059.1,935.0 L1059.0,933.8 L1059.1,932.8 L1059.4,931.8 L1060.0,931.0 L1060.6,930.4 L1061.5,929.9 L1062.4,929.7 L1063.5,929.7 L1064.5,929.9 L1065.6,930.3 L1066.7,930.9 L1067.6,931.7 L1068.5,932.6 L1069.1,933.6 L1069.7,934.7 L1070.0,935.8 L1070.1,937.0 Z" fill="#3b8b3c" stroke="#0a260a" stroke-width="1.1" stroke-linejoin="round" /><path d="M1067.1,941.0 L1066.6,941.1 L1066.1,941.2 L1065.5,941.1 L1065.0,941.0 L1064.4,940.9 L1063.9,940.7 L1063.4,940.5 L1062.8,940.2 L1062.3,939.9 L1061.8,939.5 L1061.4,939.1 L1061.0,938.6 L1060.6,938.1 L1060.2,937.6 L1059.9,937.1 L1059.6,936.5 L1059.4,936.0 L1059.2,935.4 L1059.1,934.8 L1059.0,934.3 L1059.0,933.7 L1059.1,933.2 L1059.1,932.7 L1059.3,932.2 L1059.5,931.8 L1059.7,931.3 L1060.0,931.0 L1060.3,930.6 L1060.7,930.3 L1061.1,930.1 L1061.6,929.9 L1062.0,929.8 L1063.7,928.5 L1063.3,928.6 L1062.8,928.8 L1062.4,929.0 L1062.0,929.3 L1061.7,929.7 L1061.4,930.0 L1061.2,930.5 L1061.0,930.9 L1060.8,931.4 L1060.8,931.9 L1060.7,932.4 L1060.7,933.0 L1060.8,933.5 L1060.9,934.1 L1061.1,934.7 L1061.3,935.2 L1061.6,935.8 L1061.9,936.3 L1062.3,936.8 L1062.7,937.3 L1063.1,937.8 L1063.5,938.2 L1064.0,938.6 L1064.5,938.9 L1065.1,939.2 L1065.6,939.4 L1066.1,939.6 L1066.7,939.7 L1067.2,939.8 L1067.8,939.9 L1068.3,939.8 L1068.8,939.7 Z" fill="#a6dca2" stroke="none" stroke-width="1.2" stroke-linejoin="round" />
<path d="M1097.7,944.8 L1097.6,945.8 L1097.3,946.8 L1096.8,947.6 L1096.1,948.2 L1095.3,948.7 L1094.3,948.9 L1093.3,948.9 L1092.2,948.7 L1091.1,948.3 L1090.1,947.7 L1089.1,946.9 L1088.3,946.0 L1087.6,945.0 L1087.1,943.9 L1086.8,942.8 L1086.7,941.6 L1086.8,940.6 L1087.1,939.6 L1087.6,938.8 L1088.3,938.2 L1089.1,937.7 L1090.1,937.5 L1091.1,937.5 L1092.2,937.7 L1093.3,938.1 L1094.3,938.7 L1095.3,939.5 L1096.1,940.4 L1096.8,941.4 L1097.3,942.5 L1097.6,943.6 L1097.7,944.8 Z" fill="#3b8b3c" stroke="#0a260a" stroke-width="1.1" stroke-linejoin="round" /><path d="M1094.7,948.8 L1094.2,948.9 L1093.7,949.0 L1093.2,948.9 L1092.6,948.8 L1092.1,948.7 L1091.6,948.5 L1091.0,948.3 L1090.5,948.0 L1090.0,947.7 L1089.5,947.3 L1089.0,946.9 L1088.6,946.4 L1088.2,945.9 L1087.9,945.4 L1087.5,944.9 L1087.3,944.3 L1087.1,943.8 L1086.9,943.2 L1086.8,942.6 L1086.7,942.1 L1086.7,941.5 L1086.7,941.0 L1086.8,940.5 L1086.9,940.0 L1087.1,939.6 L1087.4,939.1 L1087.7,938.8 L1088.0,938.4 L1088.4,938.1 L1088.8,937.9 L1089.2,937.7 L1089.7,937.6 L1091.4,936.3 L1090.9,936.4 L1090.5,936.6 L1090.1,936.8 L1089.7,937.1 L1089.4,937.5 L1089.1,937.8 L1088.8,938.3 L1088.6,938.7 L1088.5,939.2 L1088.4,939.7 L1088.4,940.2 L1088.4,940.8 L1088.5,941.3 L1088.6,941.9 L1088.8,942.5 L1089.0,943.0 L1089.2,943.6 L1089.6,944.1 L1089.9,944.6 L1090.3,945.1 L1090.7,945.6 L1091.2,946.0 L1091.7,946.4 L1092.2,946.7 L1092.7,947.0 L1093.3,947.2 L1093.8,947.4 L1094.3,947.5 L1094.9,947.6 L1095.4,947.7 L1095.9,947.6 L1096.4,947.5 Z" fill="#a6dca2" stroke="none" stroke-width="1.2" stroke-linejoin="round" />
<path d="M1125.4,952.6 L1125.3,953.6 L1125.0,954.6 L1124.4,955.4 L1123.8,956.0 L1122.9,956.5 L1122.0,956.7 L1120.9,956.7 L1119.8,956.5 L1118.8,956.1 L1117.7,955.5 L1116.8,954.7 L1115.9,953.8 L1115.3,952.8 L1114.7,951.7 L1114.4,950.6 L1114.3,949.4 L1114.4,948.4 L1114.7,947.4 L1115.3,946.6 L1115.9,946.0 L1116.8,945.5 L1117.7,945.3 L1118.8,945.3 L1119.8,945.5 L1120.9,945.9 L1122.0,946.5 L1122.9,947.3 L1123.8,948.2 L1124.4,949.2 L1125.0,950.3 L1125.3,951.4 L1125.4,952.6 Z" fill="#3b8b3c" stroke="#0a260a" stroke-width="1.1" stroke-linejoin="round" /><path d="M1122.4,956.6 L1121.9,956.7 L1121.4,956.8 L1120.8,956.7 L1120.3,956.6 L1119.7,956.5 L1119.2,956.3 L1118.7,956.1 L1118.1,955.8 L1117.6,955.5 L1117.1,955.1 L1116.7,954.7 L1116.3,954.2 L1115.9,953.7 L1115.5,953.2 L1115.2,952.7 L1114.9,952.1 L1114.7,951.6 L1114.5,951.0 L1114.4,950.4 L1114.3,949.9 L1114.3,949.3 L1114.4,948.8 L1114.4,948.3 L1114.6,947.8 L1114.8,947.4 L1115.0,946.9 L1115.3,946.6 L1115.6,946.2 L1116.0,945.9 L1116.4,945.7 L1116.9,945.5 L1117.3,945.4 L1119.0,944.1 L1118.6,944.2 L1118.1,944.4 L1117.7,944.6 L1117.3,944.9 L1117.0,945.3 L1116.7,945.6 L1116.5,946.1 L1116.3,946.5 L1116.1,947.0 L1116.1,947.5 L1116.0,948.0 L1116.0,948.6 L1116.1,949.1 L1116.2,949.7 L1116.4,950.3 L1116.6,950.8 L1116.9,951.4 L1117.2,951.9 L1117.6,952.4 L1118.0,952.9 L1118.4,953.4 L1118.8,953.8 L1119.3,954.2 L1119.8,954.5 L1120.4,954.8 L1120.9,955.0 L1121.4,955.2 L1122.0,955.3 L1122.5,955.4 L1123.1,955.5 L1123.6,955.4 L1124.1,955.3 Z" fill="#a6dca2" stroke="none" stroke-width="1.2" stroke-linejoin="round" />
<path d="M1153.0,960.4 L1152.9,961.4 L1152.6,962.4 L1152.1,963.2 L1151.4,963.8 L1150.6,964.3 L1149.6,964.5 L1148.6,964.5 L1147.5,964.3 L1146.4,963.9 L1145.4,963.3 L1144.4,962.5 L1143.6,961.6 L1142.9,960.6 L1142.4,959.5 L1142.1,958.4 L1142.0,957.2 L1142.1,956.2 L1142.4,955.2 L1142.9,954.4 L1143.6,953.8 L1144.4,953.3 L1145.4,953.1 L1146.4,953.1 L1147.5,953.3 L1148.6,953.7 L1149.6,954.3 L1150.6,955.1 L1151.4,956.0 L1152.1,957.0 L1152.6,958.1 L1152.9,959.2 L1153.0,960.4 Z" fill="#3b8b3c" stroke="#0a260a" stroke-width="1.1" stroke-linejoin="round" /><path d="M1150.0,964.4 L1149.5,964.5 L1149.0,964.6 L1148.5,964.5 L1147.9,964.4 L1147.4,964.3 L1146.9,964.1 L1146.3,963.9 L1145.8,963.6 L1145.3,963.3 L1144.8,962.9 L1144.3,962.5 L1143.9,962.0 L1143.5,961.5 L1143.2,961.0 L1142.8,960.5 L1142.6,959.9 L1142.4,959.4 L1142.2,958.8 L1142.1,958.2 L1142.0,957.7 L1142.0,957.1 L1142.0,956.6 L1142.1,956.1 L1142.2,955.6 L1142.4,955.2 L1142.7,954.7 L1143.0,954.4 L1143.3,954.0 L1143.7,953.7 L1144.1,953.5 L1144.5,953.3 L1145.0,953.2 L1146.7,951.9 L1146.2,952.0 L1145.8,952.2 L1145.4,952.4 L1145.0,952.7 L1144.7,953.1 L1144.4,953.4 L1144.1,953.9 L1143.9,954.3 L1143.8,954.8 L1143.7,955.3 L1143.7,955.8 L1143.7,956.4 L1143.8,956.9 L1143.9,957.5 L1144.1,958.1 L1144.3,958.6 L1144.5,959.2 L1144.9,959.7 L1145.2,960.2 L1145.6,960.7 L1146.0,961.2 L1146.5,961.6 L1147.0,962.0 L1147.5,962.3 L1148.0,962.6 L1148.6,962.8 L1149.1,963.0 L1149.6,963.1 L1150.2,963.2 L1150.7,963.3 L1151.2,963.2 L1151.7,963.1 Z" fill="#a6dca2" stroke="none" stroke-width="1.2" stroke-linejoin="round" />
<path d="M1180.7,968.2 L1180.6,969.2 L1180.3,970.2 L1179.7,971.0 L1179.1,971.6 L1178.2,972.1 L1177.3,972.3 L1176.2,972.3 L1175.2,972.1 L1174.1,971.7 L1173.0,971.1 L1172.1,970.3 L1171.2,969.4 L1170.6,968.4 L1170.0,967.3 L1169.7,966.2 L1169.6,965.0 L1169.7,964.0 L1170.0,963.0 L1170.6,962.2 L1171.2,961.6 L1172.1,961.1 L1173.0,960.9 L1174.1,960.9 L1175.2,961.1 L1176.2,961.5 L1177.3,962.1 L1178.2,962.9 L1179.1,963.8 L1179.7,964.8 L1180.3,965.9 L1180.6,967.0 L1180.7,968.2 Z" fill="#3b8b3c" stroke="#0a260a" stroke-width="1.1" stroke-linejoin="round" /><path d="M1177.7,972.2 L1177.2,972.3 L1176.7,972.4 L1176.1,972.3 L1175.6,972.2 L1175.0,972.1 L1174.5,971.9 L1174.0,971.7 L1173.4,971.4 L1172.9,971.1 L1172.4,970.7 L1172.0,970.3 L1171.6,969.8 L1171.2,969.3 L1170.8,968.8 L1170.5,968.3 L1170.2,967.7 L1170.0,967.2 L1169.8,966.6 L1169.7,966.0 L1169.6,965.5 L1169.6,964.9 L1169.7,964.4 L1169.7,963.9 L1169.9,963.4 L1170.1,963.0 L1170.3,962.5 L1170.6,962.2 L1170.9,961.8 L1171.3,961.5 L1171.7,961.3 L1172.2,961.1 L1172.6,961.0 L1174.3,959.7 L1173.9,959.8 L1173.4,960.0 L1173.0,960.2 L1172.6,960.5 L1172.3,960.9 L1172.0,961.2 L1171.8,961.7 L1171.6,962.1 L1171.4,962.6 L1171.4,963.1 L1171.3,963.6 L1171.3,964.2 L1171.4,964.7 L1171.5,965.3 L1171.7,965.9 L1171.9,966.4 L1172.2,967.0 L1172.5,967.5 L1172.9,968.0 L1173.3,968.5 L1173.7,969.0 L1174.1,969.4 L1174.6,969.8 L1175.1,970.1 L1175.7,970.4 L1176.2,970.6 L1176.7,970.8 L1177.3,970.9 L1177.8,971.0 L1178.4,971.1 L1178.9,971.0 L1179.4,970.9 Z" fill="#a6dca2" stroke="none" stroke-width="1.2" stroke-linejoin="round" />
<path d="M1208.3,976.0 L1208.2,977.0 L1207.9,978.0 L1207.4,978.8 L1206.7,979.4 L1205.9,979.9 L1204.9,980.1 L1203.9,980.1 L1202.8,979.9 L1201.7,979.5 L1200.7,978.9 L1199.7,978.1 L1198.9,977.2 L1198.2,976.2 L1197.7,975.1 L1197.4,974.0 L1197.3,972.8 L1197.4,971.8 L1197.7,970.8 L1198.2,970.0 L1198.9,969.4 L1199.7,968.9 L1200.7,968.7 L1201.7,968.7 L1202.8,968.9 L1203.9,969.3 L1204.9,969.9 L1205.9,970.7 L1206.7,971.6 L1207.4,972.6 L1207.9,973.7 L1208.2,974.8 L1208.3,976.0 Z" fill="#3b8b3c" stroke="#0a260a" stroke-width="1.1" stroke-linejoin="round" /><path d="M1205.3,980.0 L1204.8,980.1 L1204.3,980.2 L1203.8,980.1 L1203.2,980.0 L1202.7,979.9 L1202.2,979.7 L1201.6,979.5 L1201.1,979.2 L1200.6,978.9 L1200.1,978.5 L1199.6,978.1 L1199.2,977.6 L1198.8,977.1 L1198.5,976.6 L1198.1,976.1 L1197.9,975.5 L1197.7,975.0 L1197.5,974.4 L1197.4,973.8 L1197.3,973.3 L1197.3,972.7 L1197.3,972.2 L1197.4,971.7 L1197.5,971.2 L1197.7,970.8 L1198.0,970.3 L1198.3,970.0 L1198.6,969.6 L1199.0,969.3 L1199.4,969.1 L1199.8,968.9 L1200.3,968.8 L1202.0,967.5 L1201.5,967.6 L1201.1,967.8 L1200.7,968.0 L1200.3,968.3 L1200.0,968.7 L1199.7,969.0 L1199.4,969.5 L1199.2,969.9 L1199.1,970.4 L1199.0,970.9 L1199.0,971.4 L1199.0,972.0 L1199.1,972.5 L1199.2,973.1 L1199.4,973.7 L1199.6,974.2 L1199.8,974.8 L1200.2,975.3 L1200.5,975.8 L1200.9,976.3 L1201.3,976.8 L1201.8,977.2 L1202.3,977.6 L1202.8,977.9 L1203.3,978.2 L1203.9,978.4 L1204.4,978.6 L1204.9,978.7 L1205.5,978.8 L1206.0,978.9 L1206.5,978.8 L1207.0,978.7 Z" fill="#a6dca2" stroke="none" stroke-width="1.2" stroke-linejoin="round" />
<path d="M1236.0,983.8 L1235.9,984.8 L1235.6,985.8 L1235.0,986.6 L1234.4,987.2 L1233.5,987.7 L1232.6,987.9 L1231.5,987.9 L1230.5,987.7 L1229.4,987.3 L1228.3,986.7 L1227.4,985.9 L1226.5,985.0 L1225.9,984.0 L1225.3,982.9 L1225.0,981.8 L1224.9,980.6 L1225.0,979.6 L1225.3,978.6 L1225.9,977.8 L1226.5,977.2 L1227.4,976.7 L1228.3,976.5 L1229.4,976.5 L1230.5,976.7 L1231.5,977.1 L1232.6,977.7 L1233.5,978.5 L1234.4,979.4 L1235.0,980.4 L1235.6,981.5 L1235.9,982.6 L1236.0,983.8 Z" fill="#3b8b3c" stroke="#0a260a" stroke-width="1.1" stroke-linejoin="round" /><path d="M1233.0,987.8 L1232.5,987.9 L1232.0,988.0 L1231.4,987.9 L1230.9,987.8 L1230.3,987.7 L1229.8,987.5 L1229.3,987.3 L1228.7,987.0 L1228.2,986.7 L1227.7,986.3 L1227.3,985.9 L1226.9,985.4 L1226.5,984.9 L1226.1,984.4 L1225.8,983.9 L1225.5,983.3 L1225.3,982.8 L1225.1,982.2 L1225.0,981.6 L1224.9,981.1 L1224.9,980.5 L1225.0,980.0 L1225.0,979.5 L1225.2,979.0 L1225.4,978.6 L1225.6,978.1 L1225.9,977.8 L1226.2,977.4 L1226.6,977.1 L1227.0,976.9 L1227.5,976.7 L1227.9,976.6 L1229.6,975.3 L1229.2,975.4 L1228.7,975.6 L1228.3,975.8 L1227.9,976.1 L1227.6,976.5 L1227.3,976.8 L1227.1,977.3 L1226.9,977.7 L1226.7,978.2 L1226.7,978.7 L1226.6,979.2 L1226.6,979.8 L1226.7,980.3 L1226.8,980.9 L1227.0,981.5 L1227.2,982.0 L1227.5,982.6 L1227.8,983.1 L1228.2,983.6 L1228.6,984.1 L1229.0,984.6 L1229.4,985.0 L1229.9,985.4 L1230.4,985.7 L1231.0,986.0 L1231.5,986.2 L1232.0,986.4 L1232.6,986.5 L1233.1,986.6 L1233.7,986.7 L1234.2,986.6 L1234.7,986.5 Z" fill="#a6dca2" stroke="none" stroke-width="1.2" stroke-linejoin="round" />
<ellipse cx="912.6" cy="847.3" rx="6.3" ry="3.6" transform="rotate(12 912.6 847.3)" fill="#1e4a1d" stroke="#111" stroke-width="0.9"/>
<ellipse cx="940.3" cy="855.1" rx="6.3" ry="3.6" transform="rotate(12 940.3 855.1)" fill="#1e4a1d" stroke="#111" stroke-width="0.9"/>
<ellipse cx="968.0" cy="862.9" rx="6.3" ry="3.6" transform="rotate(12 968.0 862.9)" fill="#1e4a1d" stroke="#111" stroke-width="0.9"/>
<ellipse cx="995.6" cy="870.7" rx="6.3" ry="3.6" transform="rotate(12 995.6 870.7)" fill="#1e4a1d" stroke="#111" stroke-width="0.9"/>
<ellipse cx="1023.2" cy="878.5" rx="6.3" ry="3.6" transform="rotate(12 1023.2 878.5)" fill="#1e4a1d" stroke="#111" stroke-width="0.9"/>
<ellipse cx="1050.9" cy="886.3" rx="6.3" ry="3.6" transform="rotate(12 1050.9 886.3)" fill="#1e4a1d" stroke="#111" stroke-width="0.9"/>
<ellipse cx="1078.5" cy="894.1" rx="6.3" ry="3.6" transform="rotate(12 1078.5 894.1)" fill="#1e4a1d" stroke="#111" stroke-width="0.9"/>
<ellipse cx="1106.2" cy="901.9" rx="6.3" ry="3.6" transform="rotate(12 1106.2 901.9)" fill="#1e4a1d" stroke="#111" stroke-width="0.9"/>
<ellipse cx="1133.8" cy="909.7" rx="6.3" ry="3.6" transform="rotate(12 1133.8 909.7)" fill="#1e4a1d" stroke="#111" stroke-width="0.9"/>
<ellipse cx="1161.5" cy="917.5" rx="6.3" ry="3.6" transform="rotate(12 1161.5 917.5)" fill="#1e4a1d" stroke="#111" stroke-width="0.9"/>
<ellipse cx="1189.2" cy="925.3" rx="6.3" ry="3.6" transform="rotate(12 1189.2 925.3)" fill="#1e4a1d" stroke="#111" stroke-width="0.9"/>
<ellipse cx="1216.8" cy="933.1" rx="6.3" ry="3.6" transform="rotate(12 1216.8 933.1)" fill="#1e4a1d" stroke="#111" stroke-width="0.9"/>
<ellipse cx="1244.5" cy="940.9" rx="6.3" ry="3.6" transform="rotate(12 1244.5 940.9)" fill="#1e4a1d" stroke="#111" stroke-width="0.9"/>
<polygon points="870.7,465.6 926.5,481.2 927.0,868.6 870.0,852.5" fill="#265826" stroke="#111" stroke-width="1.2" stroke-linejoin="round" />
<polygon points="927.0,868.6 926.5,481.2 956.5,455.2 957.0,842.6" fill="#459c48" stroke="#111" stroke-width="1.2" stroke-linejoin="round" />
<polygon points="870.7,465.6 900.7,439.6 956.5,455.2 926.5,481.2" fill="#3f9a3d" stroke="#111" stroke-width="1.2" stroke-linejoin="round" />
<polygon points="876.0,465.0 900.0,444.5 950.0,458.0 926.0,477.0" fill="none" stroke="#111" stroke-width="1" stroke-linejoin="round" />
<path d="M904.3,667.4 L904.2,668.4 L903.9,669.4 L903.4,670.2 L902.7,670.8 L901.9,671.3 L900.9,671.5 L899.9,671.5 L898.8,671.3 L897.7,670.9 L896.7,670.3 L895.7,669.5 L894.9,668.6 L894.2,667.6 L893.7,666.5 L893.4,665.4 L893.3,664.2 L893.4,663.2 L893.7,662.2 L894.2,661.4 L894.9,660.8 L895.7,660.3 L896.7,660.1 L897.7,660.1 L898.8,660.3 L899.9,660.7 L900.9,661.3 L901.9,662.1 L902.7,663.0 L903.4,664.0 L903.9,665.1 L904.2,666.2 L904.3,667.4 Z" fill="#3b8b3c" stroke="#0a260a" stroke-width="1.1" stroke-linejoin="round" /><path d="M901.3,671.4 L900.8,671.5 L900.3,671.6 L899.8,671.5 L899.2,671.4 L898.7,671.3 L898.2,671.1 L897.6,670.9 L897.1,670.6 L896.6,670.3 L896.1,669.9 L895.6,669.5 L895.2,669.0 L894.8,668.5 L894.5,668.0 L894.1,667.5 L893.9,666.9 L893.7,666.4 L893.5,665.8 L893.4,665.2 L893.3,664.7 L893.3,664.1 L893.3,663.6 L893.4,663.1 L893.5,662.6 L893.7,662.2 L894.0,661.7 L894.3,661.4 L894.6,661.0 L895.0,660.7 L895.4,660.5 L895.8,660.3 L896.3,660.2 L898.0,658.9 L897.5,659.0 L897.1,659.2 L896.7,659.4 L896.3,659.7 L896.0,660.1 L895.7,660.4 L895.4,660.9 L895.2,661.3 L895.1,661.8 L895.0,662.3 L895.0,662.8 L895.0,663.4 L895.1,663.9 L895.2,664.5 L895.4,665.1 L895.6,665.6 L895.8,666.2 L896.2,666.7 L896.5,667.2 L896.9,667.7 L897.3,668.2 L897.8,668.6 L898.3,669.0 L898.8,669.3 L899.3,669.6 L899.9,669.8 L900.4,670.0 L900.9,670.1 L901.5,670.2 L902.0,670.3 L902.5,670.2 L903.0,670.1 Z" fill="#a6dca2" stroke="none" stroke-width="1.2" stroke-linejoin="round" />
<path d="M904.3,695.1 L904.2,696.1 L903.9,697.1 L903.4,697.9 L902.7,698.5 L901.9,699.0 L900.9,699.2 L899.9,699.2 L898.8,699.0 L897.7,698.6 L896.7,698.0 L895.7,697.2 L894.9,696.3 L894.2,695.3 L893.7,694.2 L893.4,693.1 L893.3,691.9 L893.4,690.9 L893.7,689.9 L894.2,689.1 L894.9,688.5 L895.7,688.0 L896.7,687.8 L897.7,687.8 L898.8,688.0 L899.9,688.4 L900.9,689.0 L901.9,689.8 L902.7,690.7 L903.4,691.7 L903.9,692.8 L904.2,693.9 L904.3,695.1 Z" fill="#3b8b3c" stroke="#0a260a" stroke-width="1.1" stroke-linejoin="round" /><path d="M901.3,699.1 L900.8,699.2 L900.3,699.3 L899.8,699.2 L899.2,699.1 L898.7,699.0 L898.2,698.8 L897.6,698.6 L897.1,698.3 L896.6,698.0 L896.1,697.6 L895.6,697.2 L895.2,696.7 L894.8,696.2 L894.5,695.7 L894.1,695.2 L893.9,694.6 L893.7,694.1 L893.5,693.5 L893.4,692.9 L893.3,692.4 L893.3,691.8 L893.3,691.3 L893.4,690.8 L893.5,690.3 L893.7,689.9 L894.0,689.4 L894.3,689.1 L894.6,688.7 L895.0,688.4 L895.4,688.2 L895.8,688.0 L896.3,687.9 L898.0,686.6 L897.5,686.7 L897.1,686.9 L896.7,687.1 L896.3,687.4 L896.0,687.8 L895.7,688.1 L895.4,688.6 L895.2,689.0 L895.1,689.5 L895.0,690.0 L895.0,690.5 L895.0,691.1 L895.1,691.6 L895.2,692.2 L895.4,692.8 L895.6,693.3 L895.8,693.9 L896.2,694.4 L896.5,694.9 L896.9,695.4 L897.3,695.9 L897.8,696.3 L898.3,696.7 L898.8,697.0 L899.3,697.3 L899.9,697.5 L900.4,697.7 L900.9,697.8 L901.5,697.9 L902.0,698.0 L902.5,697.9 L903.0,697.8 Z" fill="#a6dca2" stroke="none" stroke-width="1.2" stroke-linejoin="round" />
<path d="M904.3,722.8 L904.2,723.8 L903.9,724.8 L903.4,725.6 L902.7,726.2 L901.9,726.7 L900.9,726.9 L899.9,726.9 L898.8,726.7 L897.7,726.3 L896.7,725.7 L895.7,724.9 L894.9,724.0 L894.2,723.0 L893.7,721.9 L893.4,720.8 L893.3,719.6 L893.4,718.6 L893.7,717.6 L894.2,716.8 L894.9,716.2 L895.7,715.7 L896.7,715.5 L897.7,715.5 L898.8,715.7 L899.9,716.1 L900.9,716.7 L901.9,717.5 L902.7,718.4 L903.4,719.4 L903.9,720.5 L904.2,721.6 L904.3,722.8 Z" fill="#3b8b3c" stroke="#0a260a" stroke-width="1.1" stroke-linejoin="round" /><path d="M901.3,726.8 L900.8,726.9 L900.3,727.0 L899.8,726.9 L899.2,726.8 L898.7,726.7 L898.2,726.5 L897.6,726.3 L897.1,726.0 L896.6,725.7 L896.1,725.3 L895.6,724.9 L895.2,724.4 L894.8,723.9 L894.5,723.4 L894.1,722.9 L893.9,722.3 L893.7,721.8 L893.5,721.2 L893.4,720.6 L893.3,720.1 L893.3,719.5 L893.3,719.0 L893.4,718.5 L893.5,718.0 L893.7,717.6 L894.0,717.1 L894.3,716.8 L894.6,716.4 L895.0,716.1 L895.4,715.9 L895.8,715.7 L896.3,715.6 L898.0,714.3 L897.5,714.4 L897.1,714.6 L896.7,714.8 L896.3,715.1 L896.0,715.5 L895.7,715.8 L895.4,716.3 L895.2,716.7 L895.1,717.2 L895.0,717.7 L895.0,718.2 L895.0,718.8 L895.1,719.3 L895.2,719.9 L895.4,720.5 L895.6,721.0 L895.8,721.6 L896.2,722.1 L896.5,722.6 L896.9,723.1 L897.3,723.6 L897.8,724.0 L898.3,724.4 L898.8,724.7 L899.3,725.0 L899.9,725.2 L900.4,725.4 L900.9,725.5 L901.5,725.6 L902.0,725.7 L902.5,725.6 L903.0,725.5 Z" fill="#a6dca2" stroke="none" stroke-width="1.2" stroke-linejoin="round" />
<path d="M904.3,750.5 L904.2,751.5 L903.9,752.5 L903.4,753.3 L902.7,753.9 L901.9,754.4 L900.9,754.6 L899.9,754.6 L898.8,754.4 L897.7,754.0 L896.7,753.4 L895.7,752.6 L894.9,751.7 L894.2,750.7 L893.7,749.6 L893.4,748.5 L893.3,747.3 L893.4,746.3 L893.7,745.3 L894.2,744.5 L894.9,743.9 L895.7,743.4 L896.7,743.2 L897.7,743.2 L898.8,743.4 L899.9,743.8 L900.9,744.4 L901.9,745.2 L902.7,746.1 L903.4,747.1 L903.9,748.2 L904.2,749.3 L904.3,750.5 Z" fill="#3b8b3c" stroke="#0a260a" stroke-width="1.1" stroke-linejoin="round" /><path d="M901.3,754.5 L900.8,754.6 L900.3,754.7 L899.8,754.6 L899.2,754.5 L898.7,754.4 L898.2,754.2 L897.6,754.0 L897.1,753.7 L896.6,753.4 L896.1,753.0 L895.6,752.6 L895.2,752.1 L894.8,751.6 L894.5,751.1 L894.1,750.6 L893.9,750.0 L893.7,749.5 L893.5,748.9 L893.4,748.3 L893.3,747.8 L893.3,747.2 L893.3,746.7 L893.4,746.2 L893.5,745.7 L893.7,745.3 L894.0,744.8 L894.3,744.5 L894.6,744.1 L895.0,743.8 L895.4,743.6 L895.8,743.4 L896.3,743.3 L898.0,742.0 L897.5,742.1 L897.1,742.3 L896.7,742.5 L896.3,742.8 L896.0,743.2 L895.7,743.5 L895.4,744.0 L895.2,744.4 L895.1,744.9 L895.0,745.4 L895.0,745.9 L895.0,746.5 L895.1,747.0 L895.2,747.6 L895.4,748.2 L895.6,748.7 L895.8,749.3 L896.2,749.8 L896.5,750.3 L896.9,750.8 L897.3,751.3 L897.8,751.7 L898.3,752.1 L898.8,752.4 L899.3,752.7 L899.9,752.9 L900.4,753.1 L900.9,753.2 L901.5,753.3 L902.0,753.4 L902.5,753.3 L903.0,753.2 Z" fill="#a6dca2" stroke="none" stroke-width="1.2" stroke-linejoin="round" />
<path d="M904.3,778.2 L904.2,779.2 L903.9,780.2 L903.4,781.0 L902.7,781.6 L901.9,782.1 L900.9,782.3 L899.9,782.3 L898.8,782.1 L897.7,781.7 L896.7,781.1 L895.7,780.3 L894.9,779.4 L894.2,778.4 L893.7,777.3 L893.4,776.2 L893.3,775.0 L893.4,774.0 L893.7,773.0 L894.2,772.2 L894.9,771.6 L895.7,771.1 L896.7,770.9 L897.7,770.9 L898.8,771.1 L899.9,771.5 L900.9,772.1 L901.9,772.9 L902.7,773.8 L903.4,774.8 L903.9,775.9 L904.2,777.0 L904.3,778.2 Z" fill="#3b8b3c" stroke="#0a260a" stroke-width="1.1" stroke-linejoin="round" /><path d="M901.3,782.2 L900.8,782.3 L900.3,782.4 L899.8,782.3 L899.2,782.2 L898.7,782.1 L898.2,781.9 L897.6,781.7 L897.1,781.4 L896.6,781.1 L896.1,780.7 L895.6,780.3 L895.2,779.8 L894.8,779.3 L894.5,778.8 L894.1,778.3 L893.9,777.7 L893.7,777.2 L893.5,776.6 L893.4,776.0 L893.3,775.5 L893.3,774.9 L893.3,774.4 L893.4,773.9 L893.5,773.4 L893.7,773.0 L894.0,772.5 L894.3,772.2 L894.6,771.8 L895.0,771.5 L895.4,771.3 L895.8,771.1 L896.3,771.0 L898.0,769.7 L897.5,769.8 L897.1,770.0 L896.7,770.2 L896.3,770.5 L896.0,770.9 L895.7,771.2 L895.4,771.7 L895.2,772.1 L895.1,772.6 L895.0,773.1 L895.0,773.6 L895.0,774.2 L895.1,774.7 L895.2,775.3 L895.4,775.9 L895.6,776.4 L895.8,777.0 L896.2,777.5 L896.5,778.0 L896.9,778.5 L897.3,779.0 L897.8,779.4 L898.3,779.8 L898.8,780.1 L899.3,780.4 L899.9,780.6 L900.4,780.8 L900.9,780.9 L901.5,781.0 L902.0,781.1 L902.5,781.0 L903.0,780.9 Z" fill="#a6dca2" stroke="none" stroke-width="1.2" stroke-linejoin="round" />
<path d="M904.3,805.9 L904.2,806.9 L903.9,807.9 L903.4,808.7 L902.7,809.3 L901.9,809.8 L900.9,810.0 L899.9,810.0 L898.8,809.8 L897.7,809.4 L896.7,808.8 L895.7,808.0 L894.9,807.1 L894.2,806.1 L893.7,805.0 L893.4,803.9 L893.3,802.7 L893.4,801.7 L893.7,800.7 L894.2,799.9 L894.9,799.3 L895.7,798.8 L896.7,798.6 L897.7,798.6 L898.8,798.8 L899.9,799.2 L900.9,799.8 L901.9,800.6 L902.7,801.5 L903.4,802.5 L903.9,803.6 L904.2,804.7 L904.3,805.9 Z" fill="#3b8b3c" stroke="#0a260a" stroke-width="1.1" stroke-linejoin="round" /><path d="M901.3,809.9 L900.8,810.0 L900.3,810.1 L899.8,810.0 L899.2,809.9 L898.7,809.8 L898.2,809.6 L897.6,809.4 L897.1,809.1 L896.6,808.8 L896.1,808.4 L895.6,808.0 L895.2,807.5 L894.8,807.0 L894.5,806.5 L894.1,806.0 L893.9,805.4 L893.7,804.9 L893.5,804.3 L893.4,803.7 L893.3,803.2 L893.3,802.6 L893.3,802.1 L893.4,801.6 L893.5,801.1 L893.7,800.7 L894.0,800.2 L894.3,799.9 L894.6,799.5 L895.0,799.2 L895.4,799.0 L895.8,798.8 L896.3,798.7 L898.0,797.4 L897.5,797.5 L897.1,797.7 L896.7,797.9 L896.3,798.2 L896.0,798.6 L895.7,798.9 L895.4,799.4 L895.2,799.8 L895.1,800.3 L895.0,800.8 L895.0,801.3 L895.0,801.9 L895.1,802.4 L895.2,803.0 L895.4,803.6 L895.6,804.1 L895.8,804.7 L896.2,805.2 L896.5,805.7 L896.9,806.2 L897.3,806.7 L897.8,807.1 L898.3,807.5 L898.8,807.8 L899.3,808.1 L899.9,808.3 L900.4,808.5 L900.9,808.6 L901.5,808.7 L902.0,808.8 L902.5,808.7 L903.0,808.6 Z" fill="#a6dca2" stroke="none" stroke-width="1.2" stroke-linejoin="round" />
<path d="M904.3,833.6 L904.2,834.6 L903.9,835.6 L903.4,836.4 L902.7,837.0 L901.9,837.5 L900.9,837.7 L899.9,837.7 L898.8,837.5 L897.7,837.1 L896.7,836.5 L895.7,835.7 L894.9,834.8 L894.2,833.8 L893.7,832.7 L893.4,831.6 L893.3,830.4 L893.4,829.4 L893.7,828.4 L894.2,827.6 L894.9,827.0 L895.7,826.5 L896.7,826.3 L897.7,826.3 L898.8,826.5 L899.9,826.9 L900.9,827.5 L901.9,828.3 L902.7,829.2 L903.4,830.2 L903.9,831.3 L904.2,832.4 L904.3,833.6 Z" fill="#3b8b3c" stroke="#0a260a" stroke-width="1.1" stroke-linejoin="round" /><path d="M901.3,837.6 L900.8,837.7 L900.3,837.8 L899.8,837.7 L899.2,837.6 L898.7,837.5 L898.2,837.3 L897.6,837.1 L897.1,836.8 L896.6,836.5 L896.1,836.1 L895.6,835.7 L895.2,835.2 L894.8,834.7 L894.5,834.2 L894.1,833.7 L893.9,833.1 L893.7,832.6 L893.5,832.0 L893.4,831.4 L893.3,830.9 L893.3,830.3 L893.3,829.8 L893.4,829.3 L893.5,828.8 L893.7,828.4 L894.0,827.9 L894.3,827.6 L894.6,827.2 L895.0,826.9 L895.4,826.7 L895.8,826.5 L896.3,826.4 L898.0,825.1 L897.5,825.2 L897.1,825.4 L896.7,825.6 L896.3,825.9 L896.0,826.3 L895.7,826.6 L895.4,827.1 L895.2,827.5 L895.1,828.0 L895.0,828.5 L895.0,829.0 L895.0,829.6 L895.1,830.1 L895.2,830.7 L895.4,831.3 L895.6,831.8 L895.8,832.4 L896.2,832.9 L896.5,833.4 L896.9,833.9 L897.3,834.4 L897.8,834.8 L898.3,835.2 L898.8,835.5 L899.3,835.8 L899.9,836.0 L900.4,836.2 L900.9,836.3 L901.5,836.4 L902.0,836.5 L902.5,836.4 L903.0,836.3 Z" fill="#a6dca2" stroke="none" stroke-width="1.2" stroke-linejoin="round" />
<ellipse cx="941.5" cy="689.0" rx="2.8" ry="6.2" transform="rotate(18 941.5 689.0)" fill="#245524" stroke="#0a260a" stroke-width="1.2"/><ellipse cx="942.4" cy="689.5" rx="0.9" ry="3.8" transform="rotate(18 941.5 689.0)" fill="#4a964a"/>
<ellipse cx="941.5" cy="716.6" rx="2.8" ry="6.2" transform="rotate(18 941.5 716.6)" fill="#245524" stroke="#0a260a" stroke-width="1.2"/><ellipse cx="942.4" cy="717.1" rx="0.9" ry="3.8" transform="rotate(18 941.5 716.6)" fill="#4a964a"/>
<ellipse cx="941.5" cy="744.2" rx="2.8" ry="6.2" transform="rotate(18 941.5 744.2)" fill="#245524" stroke="#0a260a" stroke-width="1.2"/><ellipse cx="942.4" cy="744.7" rx="0.9" ry="3.8" transform="rotate(18 941.5 744.2)" fill="#4a964a"/>
<ellipse cx="941.5" cy="771.8" rx="2.8" ry="6.2" transform="rotate(18 941.5 771.8)" fill="#245524" stroke="#0a260a" stroke-width="1.2"/><ellipse cx="942.4" cy="772.3" rx="0.9" ry="3.8" transform="rotate(18 941.5 771.8)" fill="#4a964a"/>
<ellipse cx="941.5" cy="799.4" rx="2.8" ry="6.2" transform="rotate(18 941.5 799.4)" fill="#245524" stroke="#0a260a" stroke-width="1.2"/><ellipse cx="942.4" cy="799.9" rx="0.9" ry="3.8" transform="rotate(18 941.5 799.4)" fill="#4a964a"/>
<ellipse cx="941.5" cy="827.0" rx="2.8" ry="6.2" transform="rotate(18 941.5 827.0)" fill="#245524" stroke="#0a260a" stroke-width="1.2"/><ellipse cx="942.4" cy="827.5" rx="0.9" ry="3.8" transform="rotate(18 941.5 827.0)" fill="#4a964a"/>
<path d="M877.0,498.0 L888.1,472.5 L897.3,452.9 L904.7,439.3 L910.3,431.6 L1039.0,361.3 L1044.0,358.6 L1049.0,358.8 L1141.0,390.0 L1140.4,391.7 L1136.8,390.6 L1133.2,389.7 L1129.5,388.9 L1126.0,388.4 L1122.4,388.1 L1118.9,388.0 L1115.4,388.0 L1112.0,388.3 L1108.7,388.8 L1105.4,389.4 L1102.2,390.3 L1099.2,391.4 L1096.2,392.6 L1093.4,394.0 L1090.6,395.6 L1088.0,397.4 L1085.6,399.4 L1083.2,401.5 L1081.1,403.8 L1079.1,406.3 L1077.2,408.9 L1075.5,411.6 L1074.0,414.5 L1072.7,417.5 L1071.5,420.6 L1070.6,423.8 L1069.8,427.2 L1069.2,430.6 L1068.8,434.1 L1068.6,437.6 L1068.6,441.2 L1068.7,444.9 L1069.1,448.6 L1069.6,452.4 L1070.4,456.1 L1071.3,459.9 L1072.4,463.7 L1073.7,467.4 L1075.2,471.1 L1076.8,474.8 L1078.7,478.5 L1080.6,482.1 L1082.8,485.6 L1085.0,489.1 L1087.5,492.5 L1090.0,495.7 L1092.7,498.9 L1095.6,502.0 L1098.5,504.9 L1101.6,507.7 L1104.7,510.4 L1108.0,513.0 L1111.3,515.3 L1114.7,517.6 L1118.1,519.6 L1121.6,521.5 L1125.2,523.3 L1128.8,524.8 L1132.4,526.1 L1136.0,527.3 L1139.6,528.3 L1143.2,529.1 L1146.8,529.6 L1150.4,530.0 L1153.9,530.2 L1157.4,530.2 L1160.8,530.0 L1164.2,529.6 L1167.5,529.0 L1170.7,528.2 L1173.8,527.2 L1176.8,526.0 L1179.6,524.6 L1182.4,523.0 L1185.0,521.3 L1187.5,519.4 L1189.9,517.3 L1192.1,515.0 L1194.2,512.6 L1196.1,510.1 L1065.0,689.0 L1062.7,691.7 L1060.3,694.1 L1057.8,696.1 L1055.1,697.7 L1052.2,699.0 L1049.3,699.9 L1046.2,700.5 L1042.9,700.7 L1039.5,700.5 L1036.0,700.0 L891.0,660.0 L888.3,659.1 L886.0,658.1 L883.8,656.9 L882.0,655.5 L880.5,654.0 L879.2,652.3 L878.2,650.5 L877.4,648.5 L877.0,646.3 L876.8,644.0 Z" fill="#737373" stroke="#111" stroke-width="1.2" stroke-linejoin="round" />
<polygon points="1044.0,358.6 1051.8,351.8 1148.8,383.2 1141.0,390.0" fill="#e6e6e6" stroke="#111" stroke-width="1" stroke-linejoin="round" />
<path d="M910.3,431.6 L1039.0,361.3" fill="none" stroke="#9a9a9a" stroke-width="1.6" stroke-linejoin="round" />
<path d="M911.5,433.6 L1040.0,363.3" fill="none" stroke="#111" stroke-width="0.7" stroke-linejoin="round" />
<path d="M1199.5,507.0 L1067.5,686.0" fill="none" stroke="#8a8a8a" stroke-width="2.4" stroke-linejoin="round" />
<path d="M1201.1,508.2 L1066.6,690.2" fill="none" stroke="#111" stroke-width="0.9" stroke-linejoin="round" />
<path d="M1140.4,391.7 L1136.8,390.6 L1133.2,389.7 L1129.5,388.9 L1126.0,388.4 L1122.4,388.1 L1118.9,388.0 L1115.4,388.0 L1112.0,388.3 L1108.7,388.8 L1105.4,389.4 L1102.2,390.3 L1099.2,391.4 L1096.2,392.6 L1093.4,394.0 L1090.6,395.6 L1088.0,397.4 L1085.6,399.4 L1083.2,401.5 L1081.1,403.8 L1079.1,406.3 L1077.2,408.9 L1075.5,411.6 L1074.0,414.5 L1072.7,417.5 L1071.5,420.6 L1070.6,423.8 L1069.8,427.2 L1069.2,430.6 L1068.8,434.1 L1068.6,437.6 L1068.6,441.2 L1068.7,444.9 L1069.1,448.6 L1069.6,452.4 L1070.4,456.1 L1071.3,459.9 L1072.4,463.7 L1073.7,467.4 L1075.2,471.1 L1076.8,474.8 L1078.7,478.5 L1080.6,482.1 L1082.8,485.6 L1085.0,489.1 L1087.5,492.5 L1090.0,495.7 L1092.7,498.9 L1095.6,502.0 L1098.5,504.9 L1101.6,507.7 L1104.7,510.4 L1108.0,513.0 L1111.3,515.3 L1114.7,517.6 L1118.1,519.6 L1121.6,521.5 L1125.2,523.3 L1128.8,524.8 L1132.4,526.1 L1136.0,527.3 L1139.6,528.3 L1143.2,529.1 L1146.8,529.6 L1150.4,530.0 L1153.9,530.2 L1157.4,530.2 L1160.8,530.0 L1164.2,529.6 L1167.5,529.0 L1170.7,528.2 L1173.8,527.2 L1176.8,526.0 L1179.6,524.6 L1182.4,523.0 L1185.0,521.3 L1187.5,519.4 L1189.9,517.3 L1192.1,515.0 L1194.2,512.6 L1196.1,510.1 L1203.9,503.3 L1202.0,505.8 L1200.0,508.1 L1197.9,510.3 L1195.6,512.4 L1193.2,514.3 L1190.7,516.0 L1188.0,517.5 L1185.2,518.9 L1182.3,520.1 L1179.3,521.1 L1176.3,522.0 L1173.1,522.6 L1169.9,523.1 L1166.6,523.4 L1163.2,523.5 L1159.8,523.4 L1156.3,523.1 L1152.9,522.6 L1149.3,522.0 L1145.8,521.1 L1142.3,520.1 L1138.8,518.9 L1135.3,517.5 L1131.8,516.0 L1128.4,514.2 L1125.0,512.4 L1121.7,510.3 L1118.4,508.1 L1115.2,505.8 L1112.0,503.3 L1109.0,500.6 L1106.0,497.9 L1103.2,495.0 L1100.4,492.0 L1097.8,488.9 L1095.3,485.8 L1093.0,482.5 L1090.7,479.1 L1088.6,475.7 L1086.7,472.2 L1084.9,468.7 L1083.3,465.1 L1081.8,461.5 L1080.5,457.8 L1079.4,454.2 L1078.5,450.5 L1077.7,446.8 L1077.1,443.2 L1076.7,439.6 L1076.4,436.0 L1076.4,432.5 L1076.5,429.0 L1076.8,425.5 L1077.3,422.2 L1077.9,418.9 L1078.8,415.7 L1079.8,412.6 L1081.0,409.6 L1082.3,406.8 L1083.8,404.0 L1085.5,401.4 L1087.3,398.9 L1089.3,396.6 L1091.5,394.4 L1093.8,392.3 L1096.2,390.4 L1098.7,388.7 L1101.4,387.2 L1104.1,385.8 L1107.0,384.6 L1110.0,383.6 L1113.1,382.7 L1116.3,382.1 L1119.5,381.6 L1122.8,381.3 L1126.2,381.2 L1129.6,381.3 L1133.0,381.6 L1136.5,382.0 L1140.0,382.7 Z" fill="url(#wg2)" stroke="#111" stroke-width="0.9" stroke-linejoin="round" />
<clipPath id="hc1"><path d="M1219.5,437.0 L1219.3,441.0 L1218.7,444.9 L1217.7,448.6 L1216.3,452.0 L1214.6,455.2 L1212.5,458.1 L1210.1,460.7 L1207.3,463.0 L1204.3,464.8 L1201.0,466.3 L1197.6,467.5 L1193.9,468.2 L1190.0,468.5 L1186.1,468.3 L1182.1,467.8 L1178.0,466.9 L1173.9,465.5 L1169.9,463.8 L1166.0,461.7 L1162.1,459.2 L1158.4,456.4 L1155.0,453.3 L1151.7,450.0 L1148.7,446.4 L1145.9,442.6 L1143.5,438.7 L1141.4,434.6 L1139.7,430.4 L1138.3,426.2 L1137.3,421.9 L1136.7,417.7 L1136.5,413.6 L1136.7,409.6 L1137.3,405.7 L1138.3,402.0 L1139.7,398.6 L1141.4,395.4 L1143.5,392.5 L1145.9,389.9 L1148.7,387.6 L1151.7,385.8 L1155.0,384.3 L1158.4,383.1 L1162.1,382.4 L1166.0,382.1 L1169.9,382.3 L1173.9,382.8 L1178.0,383.8 L1182.1,385.1 L1186.1,386.8 L1190.0,388.9 L1193.9,391.4 L1197.6,394.2 L1201.0,397.3 L1204.3,400.6 L1207.3,404.2 L1210.1,408.0 L1212.5,411.9 L1214.6,416.0 L1216.3,420.2 L1217.7,424.4 L1218.7,428.7 L1219.3,432.9 L1219.5,437.0 Z"/></clipPath><path d="M1219.5,437.0 L1219.3,441.0 L1218.7,444.9 L1217.7,448.6 L1216.3,452.0 L1214.6,455.2 L1212.5,458.1 L1210.1,460.7 L1207.3,463.0 L1204.3,464.8 L1201.0,466.3 L1197.6,467.5 L1193.9,468.2 L1190.0,468.5 L1186.1,468.3 L1182.1,467.8 L1178.0,466.9 L1173.9,465.5 L1169.9,463.8 L1166.0,461.7 L1162.1,459.2 L1158.4,456.4 L1155.0,453.3 L1151.7,450.0 L1148.7,446.4 L1145.9,442.6 L1143.5,438.7 L1141.4,434.6 L1139.7,430.4 L1138.3,426.2 L1137.3,421.9 L1136.7,417.7 L1136.5,413.6 L1136.7,409.6 L1137.3,405.7 L1138.3,402.0 L1139.7,398.6 L1141.4,395.4 L1143.5,392.5 L1145.9,389.9 L1148.7,387.6 L1151.7,385.8 L1155.0,384.3 L1158.4,383.1 L1162.1,382.4 L1166.0,382.1 L1169.9,382.3 L1173.9,382.8 L1178.0,383.8 L1182.1,385.1 L1186.1,386.8 L1190.0,388.9 L1193.9,391.4 L1197.6,394.2 L1201.0,397.3 L1204.3,400.6 L1207.3,404.2 L1210.1,408.0 L1212.5,411.9 L1214.6,416.0 L1216.3,420.2 L1217.7,424.4 L1218.7,428.7 L1219.3,432.9 L1219.5,437.0 Z" fill="url(#wg2)"/><clipPath id="hc1b"><path d="M1227.3,430.2 L1227.1,434.3 L1226.5,438.1 L1225.5,441.8 L1224.1,445.2 L1222.4,448.4 L1220.3,451.4 L1217.9,453.9 L1215.1,456.2 L1212.1,458.1 L1208.8,459.6 L1205.4,460.7 L1201.7,461.4 L1197.8,461.7 L1193.9,461.6 L1189.9,461.0 L1185.8,460.1 L1181.7,458.7 L1177.7,457.0 L1173.8,454.9 L1169.9,452.4 L1166.2,449.7 L1162.8,446.6 L1159.5,443.2 L1156.5,439.6 L1153.7,435.9 L1151.3,431.9 L1149.2,427.8 L1147.5,423.6 L1146.1,419.4 L1145.1,415.2 L1144.5,411.0 L1144.3,406.8 L1144.5,402.8 L1145.1,399.0 L1146.1,395.3 L1147.5,391.8 L1149.2,388.6 L1151.3,385.7 L1153.7,383.1 L1156.5,380.9 L1159.5,379.0 L1162.8,377.5 L1166.2,376.4 L1169.9,375.7 L1173.8,375.4 L1177.7,375.5 L1181.7,376.0 L1185.8,377.0 L1189.9,378.3 L1193.9,380.1 L1197.8,382.2 L1201.7,384.6 L1205.4,387.4 L1208.8,390.5 L1212.1,393.8 L1215.1,397.4 L1217.9,401.2 L1220.3,405.2 L1222.4,409.3 L1224.1,413.4 L1225.5,417.7 L1226.5,421.9 L1227.1,426.1 L1227.3,430.2 Z"/></clipPath><g clip-path="url(#hc1)"><path d="M1227.3,430.2 L1227.1,434.3 L1226.5,438.1 L1225.5,441.8 L1224.1,445.2 L1222.4,448.4 L1220.3,451.4 L1217.9,453.9 L1215.1,456.2 L1212.1,458.1 L1208.8,459.6 L1205.4,460.7 L1201.7,461.4 L1197.8,461.7 L1193.9,461.6 L1189.9,461.0 L1185.8,460.1 L1181.7,458.7 L1177.7,457.0 L1173.8,454.9 L1169.9,452.4 L1166.2,449.7 L1162.8,446.6 L1159.5,443.2 L1156.5,439.6 L1153.7,435.9 L1151.3,431.9 L1149.2,427.8 L1147.5,423.6 L1146.1,419.4 L1145.1,415.2 L1144.5,411.0 L1144.3,406.8 L1144.5,402.8 L1145.1,399.0 L1146.1,395.3 L1147.5,391.8 L1149.2,388.6 L1151.3,385.7 L1153.7,383.1 L1156.5,380.9 L1159.5,379.0 L1162.8,377.5 L1166.2,376.4 L1169.9,375.7 L1173.8,375.4 L1177.7,375.5 L1181.7,376.0 L1185.8,377.0 L1189.9,378.3 L1193.9,380.1 L1197.8,382.2 L1201.7,384.6 L1205.4,387.4 L1208.8,390.5 L1212.1,393.8 L1215.1,397.4 L1217.9,401.2 L1220.3,405.2 L1222.4,409.3 L1224.1,413.4 L1225.5,417.7 L1226.5,421.9 L1227.1,426.1 L1227.3,430.2 Z" fill="#fff" stroke="#111" stroke-width="1"/><g clip-path="url(#hc1b)"></g><path d="M1227.3,430.2 L1227.1,434.3 L1226.5,438.1 L1225.5,441.8 L1224.1,445.2 L1222.4,448.4 L1220.3,451.4 L1217.9,453.9 L1215.1,456.2 L1212.1,458.1 L1208.8,459.6 L1205.4,460.7 L1201.7,461.4 L1197.8,461.7 L1193.9,461.6 L1189.9,461.0 L1185.8,460.1 L1181.7,458.7 L1177.7,457.0 L1173.8,454.9 L1169.9,452.4 L1166.2,449.7 L1162.8,446.6 L1159.5,443.2 L1156.5,439.6 L1153.7,435.9 L1151.3,431.9 L1149.2,427.8 L1147.5,423.6 L1146.1,419.4 L1145.1,415.2 L1144.5,411.0 L1144.3,406.8 L1144.5,402.8 L1145.1,399.0 L1146.1,395.3 L1147.5,391.8 L1149.2,388.6 L1151.3,385.7 L1153.7,383.1 L1156.5,380.9 L1159.5,379.0 L1162.8,377.5 L1166.2,376.4 L1169.9,375.7 L1173.8,375.4 L1177.7,375.5 L1181.7,376.0 L1185.8,377.0 L1189.9,378.3 L1193.9,380.1 L1197.8,382.2 L1201.7,384.6 L1205.4,387.4 L1208.8,390.5 L1212.1,393.8 L1215.1,397.4 L1217.9,401.2 L1220.3,405.2 L1222.4,409.3 L1224.1,413.4 L1225.5,417.7 L1226.5,421.9 L1227.1,426.1 L1227.3,430.2 Z" fill="none" stroke="#111" stroke-width="1"/></g><path d="M1219.5,437.0 L1219.3,441.0 L1218.7,444.9 L1217.7,448.6 L1216.3,452.0 L1214.6,455.2 L1212.5,458.1 L1210.1,460.7 L1207.3,463.0 L1204.3,464.8 L1201.0,466.3 L1197.6,467.5 L1193.9,468.2 L1190.0,468.5 L1186.1,468.3 L1182.1,467.8 L1178.0,466.9 L1173.9,465.5 L1169.9,463.8 L1166.0,461.7 L1162.1,459.2 L1158.4,456.4 L1155.0,453.3 L1151.7,450.0 L1148.7,446.4 L1145.9,442.6 L1143.5,438.7 L1141.4,434.6 L1139.7,430.4 L1138.3,426.2 L1137.3,421.9 L1136.7,417.7 L1136.5,413.6 L1136.7,409.6 L1137.3,405.7 L1138.3,402.0 L1139.7,398.6 L1141.4,395.4 L1143.5,392.5 L1145.9,389.9 L1148.7,387.6 L1151.7,385.8 L1155.0,384.3 L1158.4,383.1 L1162.1,382.4 L1166.0,382.1 L1169.9,382.3 L1173.9,382.8 L1178.0,383.8 L1182.1,385.1 L1186.1,386.8 L1190.0,388.9 L1193.9,391.4 L1197.6,394.2 L1201.0,397.3 L1204.3,400.6 L1207.3,404.2 L1210.1,408.0 L1212.5,411.9 L1214.6,416.0 L1216.3,420.2 L1217.7,424.4 L1218.7,428.7 L1219.3,432.9 L1219.5,437.0 Z" fill="none" stroke="#111" stroke-width="1.2"/>
<clipPath id="hc2"><path d="M1024.5,552.5 L1024.3,555.5 L1023.9,558.4 L1023.1,561.2 L1022.1,563.7 L1020.8,566.1 L1019.2,568.3 L1017.4,570.2 L1015.4,571.9 L1013.1,573.3 L1010.7,574.4 L1008.1,575.3 L1005.4,575.8 L1002.5,576.0 L999.5,575.9 L996.5,575.5 L993.5,574.8 L990.5,573.8 L987.5,572.5 L984.5,571.0 L981.6,569.1 L978.9,567.0 L976.3,564.7 L973.9,562.2 L971.6,559.6 L969.6,556.7 L967.8,553.8 L966.2,550.7 L964.9,547.6 L963.9,544.4 L963.1,541.3 L962.7,538.1 L962.5,535.1 L962.7,532.1 L963.1,529.2 L963.9,526.4 L964.9,523.9 L966.2,521.5 L967.8,519.3 L969.6,517.4 L971.6,515.7 L973.9,514.3 L976.3,513.2 L978.9,512.3 L981.6,511.8 L984.5,511.6 L987.5,511.7 L990.5,512.1 L993.5,512.8 L996.5,513.8 L999.5,515.1 L1002.5,516.6 L1005.4,518.5 L1008.1,520.6 L1010.7,522.9 L1013.1,525.4 L1015.4,528.0 L1017.4,530.9 L1019.2,533.8 L1020.8,536.9 L1022.1,540.0 L1023.1,543.2 L1023.9,546.3 L1024.3,549.5 L1024.5,552.5 Z"/></clipPath><path d="M1024.5,552.5 L1024.3,555.5 L1023.9,558.4 L1023.1,561.2 L1022.1,563.7 L1020.8,566.1 L1019.2,568.3 L1017.4,570.2 L1015.4,571.9 L1013.1,573.3 L1010.7,574.4 L1008.1,575.3 L1005.4,575.8 L1002.5,576.0 L999.5,575.9 L996.5,575.5 L993.5,574.8 L990.5,573.8 L987.5,572.5 L984.5,571.0 L981.6,569.1 L978.9,567.0 L976.3,564.7 L973.9,562.2 L971.6,559.6 L969.6,556.7 L967.8,553.8 L966.2,550.7 L964.9,547.6 L963.9,544.4 L963.1,541.3 L962.7,538.1 L962.5,535.1 L962.7,532.1 L963.1,529.2 L963.9,526.4 L964.9,523.9 L966.2,521.5 L967.8,519.3 L969.6,517.4 L971.6,515.7 L973.9,514.3 L976.3,513.2 L978.9,512.3 L981.6,511.8 L984.5,511.6 L987.5,511.7 L990.5,512.1 L993.5,512.8 L996.5,513.8 L999.5,515.1 L1002.5,516.6 L1005.4,518.5 L1008.1,520.6 L1010.7,522.9 L1013.1,525.4 L1015.4,528.0 L1017.4,530.9 L1019.2,533.8 L1020.8,536.9 L1022.1,540.0 L1023.1,543.2 L1023.9,546.3 L1024.3,549.5 L1024.5,552.5 Z" fill="url(#wg2)"/><clipPath id="hc2b"><path d="M1032.3,545.8 L1032.1,548.8 L1031.7,551.7 L1030.9,554.4 L1029.9,557.0 L1028.6,559.4 L1027.0,561.5 L1025.2,563.5 L1023.2,565.2 L1020.9,566.6 L1018.5,567.7 L1015.9,568.5 L1013.2,569.0 L1010.3,569.3 L1007.3,569.2 L1004.3,568.8 L1001.3,568.1 L998.3,567.1 L995.3,565.8 L992.3,564.2 L989.4,562.4 L986.7,560.3 L984.1,558.0 L981.7,555.5 L979.4,552.8 L977.4,550.0 L975.6,547.0 L974.0,544.0 L972.7,540.8 L971.7,537.7 L970.9,534.5 L970.5,531.4 L970.3,528.3 L970.5,525.3 L970.9,522.4 L971.7,519.7 L972.7,517.1 L974.0,514.7 L975.6,512.5 L977.4,510.6 L979.4,508.9 L981.7,507.5 L984.1,506.4 L986.7,505.6 L989.4,505.0 L992.3,504.8 L995.3,504.9 L998.3,505.3 L1001.3,506.0 L1004.3,507.0 L1007.3,508.3 L1010.3,509.9 L1013.2,511.7 L1015.9,513.8 L1018.5,516.1 L1020.9,518.6 L1023.2,521.3 L1025.2,524.1 L1027.0,527.1 L1028.6,530.1 L1029.9,533.2 L1030.9,536.4 L1031.7,539.6 L1032.1,542.7 L1032.3,545.8 Z"/></clipPath><g clip-path="url(#hc2)"><path d="M1032.3,545.8 L1032.1,548.8 L1031.7,551.7 L1030.9,554.4 L1029.9,557.0 L1028.6,559.4 L1027.0,561.5 L1025.2,563.5 L1023.2,565.2 L1020.9,566.6 L1018.5,567.7 L1015.9,568.5 L1013.2,569.0 L1010.3,569.3 L1007.3,569.2 L1004.3,568.8 L1001.3,568.1 L998.3,567.1 L995.3,565.8 L992.3,564.2 L989.4,562.4 L986.7,560.3 L984.1,558.0 L981.7,555.5 L979.4,552.8 L977.4,550.0 L975.6,547.0 L974.0,544.0 L972.7,540.8 L971.7,537.7 L970.9,534.5 L970.5,531.4 L970.3,528.3 L970.5,525.3 L970.9,522.4 L971.7,519.7 L972.7,517.1 L974.0,514.7 L975.6,512.5 L977.4,510.6 L979.4,508.9 L981.7,507.5 L984.1,506.4 L986.7,505.6 L989.4,505.0 L992.3,504.8 L995.3,504.9 L998.3,505.3 L1001.3,506.0 L1004.3,507.0 L1007.3,508.3 L1010.3,509.9 L1013.2,511.7 L1015.9,513.8 L1018.5,516.1 L1020.9,518.6 L1023.2,521.3 L1025.2,524.1 L1027.0,527.1 L1028.6,530.1 L1029.9,533.2 L1030.9,536.4 L1031.7,539.6 L1032.1,542.7 L1032.3,545.8 Z" fill="#737373" stroke="#111" stroke-width="1"/><g clip-path="url(#hc2b)"></g><path d="M1032.3,545.8 L1032.1,548.8 L1031.7,551.7 L1030.9,554.4 L1029.9,557.0 L1028.6,559.4 L1027.0,561.5 L1025.2,563.5 L1023.2,565.2 L1020.9,566.6 L1018.5,567.7 L1015.9,568.5 L1013.2,569.0 L1010.3,569.3 L1007.3,569.2 L1004.3,568.8 L1001.3,568.1 L998.3,567.1 L995.3,565.8 L992.3,564.2 L989.4,562.4 L986.7,560.3 L984.1,558.0 L981.7,555.5 L979.4,552.8 L977.4,550.0 L975.6,547.0 L974.0,544.0 L972.7,540.8 L971.7,537.7 L970.9,534.5 L970.5,531.4 L970.3,528.3 L970.5,525.3 L970.9,522.4 L971.7,519.7 L972.7,517.1 L974.0,514.7 L975.6,512.5 L977.4,510.6 L979.4,508.9 L981.7,507.5 L984.1,506.4 L986.7,505.6 L989.4,505.0 L992.3,504.8 L995.3,504.9 L998.3,505.3 L1001.3,506.0 L1004.3,507.0 L1007.3,508.3 L1010.3,509.9 L1013.2,511.7 L1015.9,513.8 L1018.5,516.1 L1020.9,518.6 L1023.2,521.3 L1025.2,524.1 L1027.0,527.1 L1028.6,530.1 L1029.9,533.2 L1030.9,536.4 L1031.7,539.6 L1032.1,542.7 L1032.3,545.8 Z" fill="none" stroke="#111" stroke-width="1"/></g><path d="M1024.5,552.5 L1024.3,555.5 L1023.9,558.4 L1023.1,561.2 L1022.1,563.7 L1020.8,566.1 L1019.2,568.3 L1017.4,570.2 L1015.4,571.9 L1013.1,573.3 L1010.7,574.4 L1008.1,575.3 L1005.4,575.8 L1002.5,576.0 L999.5,575.9 L996.5,575.5 L993.5,574.8 L990.5,573.8 L987.5,572.5 L984.5,571.0 L981.6,569.1 L978.9,567.0 L976.3,564.7 L973.9,562.2 L971.6,559.6 L969.6,556.7 L967.8,553.8 L966.2,550.7 L964.9,547.6 L963.9,544.4 L963.1,541.3 L962.7,538.1 L962.5,535.1 L962.7,532.1 L963.1,529.2 L963.9,526.4 L964.9,523.9 L966.2,521.5 L967.8,519.3 L969.6,517.4 L971.6,515.7 L973.9,514.3 L976.3,513.2 L978.9,512.3 L981.6,511.8 L984.5,511.6 L987.5,511.7 L990.5,512.1 L993.5,512.8 L996.5,513.8 L999.5,515.1 L1002.5,516.6 L1005.4,518.5 L1008.1,520.6 L1010.7,522.9 L1013.1,525.4 L1015.4,528.0 L1017.4,530.9 L1019.2,533.8 L1020.8,536.9 L1022.1,540.0 L1023.1,543.2 L1023.9,546.3 L1024.3,549.5 L1024.5,552.5 Z" fill="none" stroke="#111" stroke-width="1.2"/>
<clipPath id="hc3"><path d="M1059.2,666.7 L1059.0,669.7 L1058.6,672.6 L1057.8,675.4 L1056.8,677.9 L1055.5,680.3 L1053.9,682.5 L1052.1,684.4 L1050.1,686.1 L1047.8,687.5 L1045.4,688.6 L1042.8,689.5 L1040.1,690.0 L1037.2,690.2 L1034.2,690.1 L1031.2,689.7 L1028.2,689.0 L1025.2,688.0 L1022.2,686.7 L1019.2,685.2 L1016.3,683.3 L1013.6,681.2 L1011.0,678.9 L1008.6,676.4 L1006.3,673.8 L1004.3,670.9 L1002.5,668.0 L1000.9,664.9 L999.6,661.8 L998.6,658.6 L997.8,655.5 L997.4,652.3 L997.2,649.3 L997.4,646.3 L997.8,643.4 L998.6,640.6 L999.6,638.1 L1000.9,635.7 L1002.5,633.5 L1004.3,631.6 L1006.3,629.9 L1008.6,628.5 L1011.0,627.4 L1013.6,626.5 L1016.3,626.0 L1019.2,625.8 L1022.2,625.9 L1025.2,626.3 L1028.2,627.0 L1031.2,628.0 L1034.2,629.3 L1037.2,630.8 L1040.1,632.7 L1042.8,634.8 L1045.4,637.1 L1047.8,639.6 L1050.1,642.2 L1052.1,645.1 L1053.9,648.0 L1055.5,651.1 L1056.8,654.2 L1057.8,657.4 L1058.6,660.5 L1059.0,663.7 L1059.2,666.7 Z"/></clipPath><path d="M1059.2,666.7 L1059.0,669.7 L1058.6,672.6 L1057.8,675.4 L1056.8,677.9 L1055.5,680.3 L1053.9,682.5 L1052.1,684.4 L1050.1,686.1 L1047.8,687.5 L1045.4,688.6 L1042.8,689.5 L1040.1,690.0 L1037.2,690.2 L1034.2,690.1 L1031.2,689.7 L1028.2,689.0 L1025.2,688.0 L1022.2,686.7 L1019.2,685.2 L1016.3,683.3 L1013.6,681.2 L1011.0,678.9 L1008.6,676.4 L1006.3,673.8 L1004.3,670.9 L1002.5,668.0 L1000.9,664.9 L999.6,661.8 L998.6,658.6 L997.8,655.5 L997.4,652.3 L997.2,649.3 L997.4,646.3 L997.8,643.4 L998.6,640.6 L999.6,638.1 L1000.9,635.7 L1002.5,633.5 L1004.3,631.6 L1006.3,629.9 L1008.6,628.5 L1011.0,627.4 L1013.6,626.5 L1016.3,626.0 L1019.2,625.8 L1022.2,625.9 L1025.2,626.3 L1028.2,627.0 L1031.2,628.0 L1034.2,629.3 L1037.2,630.8 L1040.1,632.7 L1042.8,634.8 L1045.4,637.1 L1047.8,639.6 L1050.1,642.2 L1052.1,645.1 L1053.9,648.0 L1055.5,651.1 L1056.8,654.2 L1057.8,657.4 L1058.6,660.5 L1059.0,663.7 L1059.2,666.7 Z" fill="url(#wg2)"/><clipPath id="hc3b"><path d="M1067.0,660.0 L1066.8,663.0 L1066.4,665.9 L1065.6,668.6 L1064.6,671.2 L1063.3,673.6 L1061.7,675.7 L1059.9,677.7 L1057.9,679.4 L1055.6,680.8 L1053.2,681.9 L1050.6,682.7 L1047.9,683.2 L1045.0,683.5 L1042.0,683.4 L1039.0,683.0 L1036.0,682.3 L1033.0,681.3 L1030.0,680.0 L1027.0,678.4 L1024.1,676.6 L1021.4,674.5 L1018.8,672.2 L1016.4,669.7 L1014.1,667.0 L1012.1,664.2 L1010.3,661.2 L1008.7,658.2 L1007.4,655.0 L1006.4,651.9 L1005.6,648.7 L1005.2,645.6 L1005.0,642.5 L1005.2,639.5 L1005.6,636.6 L1006.4,633.9 L1007.4,631.3 L1008.7,628.9 L1010.3,626.7 L1012.1,624.8 L1014.1,623.1 L1016.4,621.7 L1018.8,620.6 L1021.4,619.8 L1024.1,619.2 L1027.0,619.0 L1030.0,619.1 L1033.0,619.5 L1036.0,620.2 L1039.0,621.2 L1042.0,622.5 L1045.0,624.1 L1047.9,625.9 L1050.6,628.0 L1053.2,630.3 L1055.6,632.8 L1057.9,635.5 L1059.9,638.3 L1061.7,641.3 L1063.3,644.3 L1064.6,647.4 L1065.6,650.6 L1066.4,653.8 L1066.8,656.9 L1067.0,660.0 Z"/></clipPath><g clip-path="url(#hc3)"><path d="M1067.0,660.0 L1066.8,663.0 L1066.4,665.9 L1065.6,668.6 L1064.6,671.2 L1063.3,673.6 L1061.7,675.7 L1059.9,677.7 L1057.9,679.4 L1055.6,680.8 L1053.2,681.9 L1050.6,682.7 L1047.9,683.2 L1045.0,683.5 L1042.0,683.4 L1039.0,683.0 L1036.0,682.3 L1033.0,681.3 L1030.0,680.0 L1027.0,678.4 L1024.1,676.6 L1021.4,674.5 L1018.8,672.2 L1016.4,669.7 L1014.1,667.0 L1012.1,664.2 L1010.3,661.2 L1008.7,658.2 L1007.4,655.0 L1006.4,651.9 L1005.6,648.7 L1005.2,645.6 L1005.0,642.5 L1005.2,639.5 L1005.6,636.6 L1006.4,633.9 L1007.4,631.3 L1008.7,628.9 L1010.3,626.7 L1012.1,624.8 L1014.1,623.1 L1016.4,621.7 L1018.8,620.6 L1021.4,619.8 L1024.1,619.2 L1027.0,619.0 L1030.0,619.1 L1033.0,619.5 L1036.0,620.2 L1039.0,621.2 L1042.0,622.5 L1045.0,624.1 L1047.9,625.9 L1050.6,628.0 L1053.2,630.3 L1055.6,632.8 L1057.9,635.5 L1059.9,638.3 L1061.7,641.3 L1063.3,644.3 L1064.6,647.4 L1065.6,650.6 L1066.4,653.8 L1066.8,656.9 L1067.0,660.0 Z" fill="#737373" stroke="#111" stroke-width="1"/><g clip-path="url(#hc3b)"><polygon points="1000,644 1062,661 1070,720 990,720" fill="#fff"/><path d="M1000,645.5 L1062,662.5" stroke="#111" stroke-width="1"/></g><path d="M1067.0,660.0 L1066.8,663.0 L1066.4,665.9 L1065.6,668.6 L1064.6,671.2 L1063.3,673.6 L1061.7,675.7 L1059.9,677.7 L1057.9,679.4 L1055.6,680.8 L1053.2,681.9 L1050.6,682.7 L1047.9,683.2 L1045.0,683.5 L1042.0,683.4 L1039.0,683.0 L1036.0,682.3 L1033.0,681.3 L1030.0,680.0 L1027.0,678.4 L1024.1,676.6 L1021.4,674.5 L1018.8,672.2 L1016.4,669.7 L1014.1,667.0 L1012.1,664.2 L1010.3,661.2 L1008.7,658.2 L1007.4,655.0 L1006.4,651.9 L1005.6,648.7 L1005.2,645.6 L1005.0,642.5 L1005.2,639.5 L1005.6,636.6 L1006.4,633.9 L1007.4,631.3 L1008.7,628.9 L1010.3,626.7 L1012.1,624.8 L1014.1,623.1 L1016.4,621.7 L1018.8,620.6 L1021.4,619.8 L1024.1,619.2 L1027.0,619.0 L1030.0,619.1 L1033.0,619.5 L1036.0,620.2 L1039.0,621.2 L1042.0,622.5 L1045.0,624.1 L1047.9,625.9 L1050.6,628.0 L1053.2,630.3 L1055.6,632.8 L1057.9,635.5 L1059.9,638.3 L1061.7,641.3 L1063.3,644.3 L1064.6,647.4 L1065.6,650.6 L1066.4,653.8 L1066.8,656.9 L1067.0,660.0 Z" fill="none" stroke="#111" stroke-width="1"/></g><path d="M1059.2,666.7 L1059.0,669.7 L1058.6,672.6 L1057.8,675.4 L1056.8,677.9 L1055.5,680.3 L1053.9,682.5 L1052.1,684.4 L1050.1,686.1 L1047.8,687.5 L1045.4,688.6 L1042.8,689.5 L1040.1,690.0 L1037.2,690.2 L1034.2,690.1 L1031.2,689.7 L1028.2,689.0 L1025.2,688.0 L1022.2,686.7 L1019.2,685.2 L1016.3,683.3 L1013.6,681.2 L1011.0,678.9 L1008.6,676.4 L1006.3,673.8 L1004.3,670.9 L1002.5,668.0 L1000.9,664.9 L999.6,661.8 L998.6,658.6 L997.8,655.5 L997.4,652.3 L997.2,649.3 L997.4,646.3 L997.8,643.4 L998.6,640.6 L999.6,638.1 L1000.9,635.7 L1002.5,633.5 L1004.3,631.6 L1006.3,629.9 L1008.6,628.5 L1011.0,627.4 L1013.6,626.5 L1016.3,626.0 L1019.2,625.8 L1022.2,625.9 L1025.2,626.3 L1028.2,627.0 L1031.2,628.0 L1034.2,629.3 L1037.2,630.8 L1040.1,632.7 L1042.8,634.8 L1045.4,637.1 L1047.8,639.6 L1050.1,642.2 L1052.1,645.1 L1053.9,648.0 L1055.5,651.1 L1056.8,654.2 L1057.8,657.4 L1058.6,660.5 L1059.0,663.7 L1059.2,666.7 Z" fill="none" stroke="#111" stroke-width="1.2"/>
<g clip-path="url(#hc3)"><path d="M1067.0,660.0 L1066.8,663.0 L1066.4,665.9 L1065.6,668.6 L1064.6,671.2 L1063.3,673.6 L1061.7,675.7 L1059.9,677.7 L1057.9,679.4 L1055.6,680.8 L1053.2,681.9 L1050.6,682.7 L1047.9,683.2 L1045.0,683.5 L1042.0,683.4 L1039.0,683.0 L1036.0,682.3 L1033.0,681.3 L1030.0,680.0 L1027.0,678.4 L1024.1,676.6 L1021.4,674.5 L1018.8,672.2 L1016.4,669.7 L1014.1,667.0 L1012.1,664.2 L1010.3,661.2 L1008.7,658.2 L1007.4,655.0 L1006.4,651.9 L1005.6,648.7 L1005.2,645.6 L1005.0,642.5 L1005.2,639.5 L1005.6,636.6 L1006.4,633.9 L1007.4,631.3 L1008.7,628.9 L1010.3,626.7 L1012.1,624.8 L1014.1,623.1 L1016.4,621.7 L1018.8,620.6 L1021.4,619.8 L1024.1,619.2 L1027.0,619.0 L1030.0,619.1 L1033.0,619.5 L1036.0,620.2 L1039.0,621.2 L1042.0,622.5 L1045.0,624.1 L1047.9,625.9 L1050.6,628.0 L1053.2,630.3 L1055.6,632.8 L1057.9,635.5 L1059.9,638.3 L1061.7,641.3 L1063.3,644.3 L1064.6,647.4 L1065.6,650.6 L1066.4,653.8 L1066.8,656.9 L1067.0,660.0 Z" fill="none" stroke="#111" stroke-width="1" stroke-linejoin="round" /></g>
<path d="M926.2,445.0 L925.9,446.5 L925.2,447.7 L924.1,448.5 L922.7,448.8 L921.2,448.6 L919.7,447.9 L918.3,446.8 L917.2,445.4 L916.5,443.8 L916.2,442.2 L916.5,440.7 L917.2,439.5 L918.3,438.7 L919.7,438.4 L921.2,438.6 L922.7,439.3 L924.1,440.4 L925.2,441.8 L925.9,443.4 L926.2,445.0 Z" fill="#c9c9c9" stroke="#111" stroke-width="1.1" stroke-linejoin="round" />
<path d="M923.7,445.3 L923.6,446.3 L923.1,447.1 L922.4,447.6 L921.4,447.9 L920.4,447.7 L919.4,447.3 L918.4,446.5 L917.7,445.6 L917.2,444.5 L917.1,443.5 L917.2,442.5 L917.7,441.7 L918.4,441.2 L919.4,440.9 L920.4,441.1 L921.4,441.5 L922.4,442.3 L923.1,443.2 L923.6,444.3 L923.7,445.3 Z" fill="#dedede" stroke="none" stroke-width="1.2" stroke-linejoin="round" />
<path d="M895.6,509.8 L895.3,511.3 L894.6,512.5 L893.5,513.3 L892.1,513.6 L890.6,513.4 L889.1,512.7 L887.7,511.6 L886.6,510.2 L885.9,508.6 L885.6,507.0 L885.9,505.5 L886.6,504.3 L887.7,503.5 L889.1,503.2 L890.6,503.4 L892.1,504.1 L893.5,505.2 L894.6,506.6 L895.3,508.2 L895.6,509.8 Z" fill="#c9c9c9" stroke="#111" stroke-width="1.1" stroke-linejoin="round" />
<path d="M893.1,510.1 L893.0,511.1 L892.5,511.9 L891.8,512.4 L890.8,512.7 L889.8,512.5 L888.8,512.1 L887.8,511.3 L887.1,510.4 L886.6,509.3 L886.5,508.3 L886.6,507.3 L887.1,506.5 L887.8,506.0 L888.8,505.7 L889.8,505.9 L890.8,506.3 L891.8,507.1 L892.5,508.0 L893.0,509.1 L893.1,510.1 Z" fill="#dedede" stroke="none" stroke-width="1.2" stroke-linejoin="round" />
<path d="M895.6,647.2 L895.3,648.7 L894.6,649.9 L893.5,650.7 L892.1,651.0 L890.6,650.8 L889.1,650.1 L887.7,649.0 L886.6,647.6 L885.9,646.0 L885.6,644.4 L885.9,642.9 L886.6,641.7 L887.7,640.9 L889.1,640.6 L890.6,640.8 L892.1,641.5 L893.5,642.6 L894.6,644.0 L895.3,645.6 L895.6,647.2 Z" fill="#c9c9c9" stroke="#111" stroke-width="1.1" stroke-linejoin="round" />
<path d="M893.1,647.5 L893.0,648.5 L892.5,649.3 L891.8,649.8 L890.8,650.1 L889.8,649.9 L888.8,649.5 L887.8,648.7 L887.1,647.8 L886.6,646.7 L886.5,645.7 L886.6,644.7 L887.1,643.9 L887.8,643.4 L888.8,643.1 L889.8,643.3 L890.8,643.7 L891.8,644.5 L892.5,645.4 L893.0,646.5 L893.1,647.5 Z" fill="#dedede" stroke="none" stroke-width="1.2" stroke-linejoin="round" />
<path d="M1053.3,375.4 L1053.0,376.9 L1052.3,378.1 L1051.2,378.9 L1049.8,379.2 L1048.3,379.0 L1046.8,378.3 L1045.4,377.2 L1044.3,375.8 L1043.6,374.2 L1043.3,372.6 L1043.6,371.1 L1044.3,369.9 L1045.4,369.1 L1046.8,368.8 L1048.3,369.0 L1049.8,369.7 L1051.2,370.8 L1052.3,372.2 L1053.0,373.8 L1053.3,375.4 Z" fill="#c9c9c9" stroke="#111" stroke-width="1.1" stroke-linejoin="round" />
<path d="M1050.8,375.7 L1050.7,376.7 L1050.2,377.5 L1049.5,378.0 L1048.5,378.3 L1047.5,378.1 L1046.5,377.7 L1045.5,376.9 L1044.8,376.0 L1044.3,374.9 L1044.2,373.9 L1044.3,372.9 L1044.8,372.1 L1045.5,371.6 L1046.5,371.3 L1047.5,371.5 L1048.5,371.9 L1049.5,372.7 L1050.2,373.6 L1050.7,374.7 L1050.8,375.7 Z" fill="#dedede" stroke="none" stroke-width="1.2" stroke-linejoin="round" />
<path d="M1129.8,394.2 L1129.5,395.7 L1128.8,396.9 L1127.7,397.7 L1126.3,398.0 L1124.8,397.8 L1123.3,397.1 L1121.9,396.0 L1120.8,394.6 L1120.1,393.0 L1119.8,391.4 L1120.1,389.9 L1120.8,388.7 L1121.9,387.9 L1123.3,387.6 L1124.8,387.8 L1126.3,388.5 L1127.7,389.6 L1128.8,391.0 L1129.5,392.6 L1129.8,394.2 Z" fill="#c9c9c9" stroke="#111" stroke-width="1.1" stroke-linejoin="round" />
<path d="M1127.3,394.5 L1127.2,395.5 L1126.7,396.3 L1126.0,396.8 L1125.0,397.1 L1124.0,396.9 L1123.0,396.5 L1122.0,395.7 L1121.3,394.8 L1120.8,393.7 L1120.7,392.7 L1120.8,391.7 L1121.3,390.9 L1122.0,390.4 L1123.0,390.1 L1124.0,390.3 L1125.0,390.7 L1126.0,391.5 L1126.7,392.4 L1127.2,393.5 L1127.3,394.5 Z" fill="#dedede" stroke="none" stroke-width="1.2" stroke-linejoin="round" />
<path d="M1223.6,402.4 L1223.3,403.9 L1222.6,405.1 L1221.5,405.9 L1220.1,406.2 L1218.6,406.0 L1217.1,405.3 L1215.7,404.2 L1214.6,402.8 L1213.9,401.2 L1213.6,399.6 L1213.9,398.1 L1214.6,396.9 L1215.7,396.1 L1217.1,395.8 L1218.6,396.0 L1220.1,396.7 L1221.5,397.8 L1222.6,399.2 L1223.3,400.8 L1223.6,402.4 Z" fill="#c9c9c9" stroke="#111" stroke-width="1.1" stroke-linejoin="round" />
<path d="M1221.1,402.7 L1221.0,403.7 L1220.5,404.5 L1219.8,405.0 L1218.8,405.3 L1217.8,405.1 L1216.8,404.7 L1215.8,403.9 L1215.1,403.0 L1214.6,401.9 L1214.5,400.9 L1214.6,399.9 L1215.1,399.1 L1215.8,398.6 L1216.8,398.3 L1217.8,398.5 L1218.8,398.9 L1219.8,399.7 L1220.5,400.6 L1221.0,401.7 L1221.1,402.7 Z" fill="#dedede" stroke="none" stroke-width="1.2" stroke-linejoin="round" />
<path d="M1192.6,483.4 L1192.3,484.9 L1191.6,486.1 L1190.5,486.9 L1189.1,487.2 L1187.6,487.0 L1186.1,486.3 L1184.7,485.2 L1183.6,483.8 L1182.9,482.2 L1182.6,480.6 L1182.9,479.1 L1183.6,477.9 L1184.7,477.1 L1186.1,476.8 L1187.6,477.0 L1189.1,477.7 L1190.5,478.8 L1191.6,480.2 L1192.3,481.8 L1192.6,483.4 Z" fill="#c9c9c9" stroke="#111" stroke-width="1.1" stroke-linejoin="round" />
<path d="M1190.1,483.7 L1190.0,484.7 L1189.5,485.5 L1188.8,486.0 L1187.8,486.3 L1186.8,486.1 L1185.8,485.7 L1184.8,484.9 L1184.1,484.0 L1183.6,482.9 L1183.5,481.9 L1183.6,480.9 L1184.1,480.1 L1184.8,479.6 L1185.8,479.3 L1186.8,479.5 L1187.8,479.9 L1188.8,480.7 L1189.5,481.6 L1190.0,482.7 L1190.1,483.7 Z" fill="#dedede" stroke="none" stroke-width="1.2" stroke-linejoin="round" />
<path d="M1204.5,508.2 L1204.2,509.7 L1203.5,510.9 L1202.4,511.7 L1201.0,512.0 L1199.5,511.8 L1198.0,511.1 L1196.6,510.0 L1195.5,508.6 L1194.8,507.0 L1194.5,505.4 L1194.8,503.9 L1195.5,502.7 L1196.6,501.9 L1198.0,501.6 L1199.5,501.8 L1201.0,502.5 L1202.4,503.6 L1203.5,505.0 L1204.2,506.6 L1204.5,508.2 Z" fill="#c9c9c9" stroke="#111" stroke-width="1.1" stroke-linejoin="round" />
<path d="M1202.0,508.5 L1201.9,509.5 L1201.4,510.3 L1200.7,510.8 L1199.7,511.1 L1198.7,510.9 L1197.7,510.5 L1196.7,509.7 L1196.0,508.8 L1195.5,507.7 L1195.4,506.7 L1195.5,505.7 L1196.0,504.9 L1196.7,504.4 L1197.7,504.1 L1198.7,504.3 L1199.7,504.7 L1200.7,505.5 L1201.4,506.4 L1201.9,507.5 L1202.0,508.5 Z" fill="#dedede" stroke="none" stroke-width="1.2" stroke-linejoin="round" />
<path d="M1164.3,543.6 L1164.0,545.1 L1163.3,546.3 L1162.2,547.1 L1160.8,547.4 L1159.3,547.2 L1157.8,546.5 L1156.4,545.4 L1155.3,544.0 L1154.6,542.4 L1154.3,540.8 L1154.6,539.3 L1155.3,538.1 L1156.4,537.3 L1157.8,537.0 L1159.3,537.2 L1160.8,537.9 L1162.2,539.0 L1163.3,540.4 L1164.0,542.0 L1164.3,543.6 Z" fill="#c9c9c9" stroke="#111" stroke-width="1.1" stroke-linejoin="round" />
<path d="M1161.8,543.9 L1161.7,544.9 L1161.2,545.7 L1160.5,546.2 L1159.5,546.5 L1158.5,546.3 L1157.5,545.9 L1156.5,545.1 L1155.8,544.2 L1155.3,543.1 L1155.2,542.1 L1155.3,541.1 L1155.8,540.3 L1156.5,539.8 L1157.5,539.5 L1158.5,539.7 L1159.5,540.1 L1160.5,540.9 L1161.2,541.8 L1161.7,542.9 L1161.8,543.9 Z" fill="#dedede" stroke="none" stroke-width="1.2" stroke-linejoin="round" />
<path d="M1120.4,601.7 L1120.1,603.2 L1119.4,604.4 L1118.3,605.2 L1116.9,605.5 L1115.4,605.3 L1113.9,604.6 L1112.5,603.5 L1111.4,602.1 L1110.7,600.5 L1110.4,598.9 L1110.7,597.4 L1111.4,596.2 L1112.5,595.4 L1113.9,595.1 L1115.4,595.3 L1116.9,596.0 L1118.3,597.1 L1119.4,598.5 L1120.1,600.1 L1120.4,601.7 Z" fill="#c9c9c9" stroke="#111" stroke-width="1.1" stroke-linejoin="round" />
<path d="M1117.9,602.0 L1117.8,603.0 L1117.3,603.8 L1116.6,604.3 L1115.6,604.6 L1114.6,604.4 L1113.6,604.0 L1112.6,603.2 L1111.9,602.3 L1111.4,601.2 L1111.3,600.2 L1111.4,599.2 L1111.9,598.4 L1112.6,597.9 L1113.6,597.6 L1114.6,597.8 L1115.6,598.2 L1116.6,599.0 L1117.3,599.9 L1117.8,601.0 L1117.9,602.0 Z" fill="#dedede" stroke="none" stroke-width="1.2" stroke-linejoin="round" />
<circle cx="870.5" cy="906.5" r="4.5" fill="#fff" stroke="#111" stroke-width="1.5"/><circle cx="870.5" cy="906.5" r="1.6" fill="#111"/></svg>
<svg class="a" style="left:0;top:0;pointer-events:none" width="1919" height="1079" viewBox="0 0 1919 1079"><g transform="translate(14.5,20)"><path d="M0,-11 L9.5,-5.5 L9.5,5.5 L0,11 L-9.5,5.5 L-9.5,-5.5 Z M0,-5.8 L-5,-2.9 L-5,2.9 L0,5.8 L5,2.9 L5,-2.9 Z" fill="#5fb34f" fill-rule="evenodd"/><path d="M-2.5,-3.6 L-3.5,-1.8 V1.8 L0,3.6 L2,2.5 M2.5,-3.4 L3.5,-1.8 V1" fill="none" stroke="#555" stroke-width="1.1"/></g>
<rect x="113" y="15" width="16" height="3" fill="#333"/>
<rect x="113" y="20.5" width="16" height="3" fill="#333"/>
<rect x="113" y="26" width="16" height="3" fill="#333"/>
<g transform="rotate(-45 652 22)" fill="none" stroke="#444" stroke-width="1.9"><rect x="642.5" y="19" width="10" height="6" rx="3"/><rect x="651.5" y="19" width="10" height="6" rx="3"/></g>
<path d="M669.5,15.5 h6 l1.5,2 h9.5 v11 h-17 z" fill="none" stroke="#8a8a8a" stroke-width="1.1"/>
<g fill="#1e5bb8"><polygon points="805,12 813,16 805,20 797,16"/><path d="M800,18 v4 q5,3 10,0 v-4 l-5,2.5 z"/><rect x="798" y="16" width="1.2" height="9"/></g>
<circle cx="831" cy="20" r="8.3" fill="none" stroke="#333" stroke-width="1.5"/><path d="M826,14 q3,-2 6,-1 l-1,3 -3,1 -1,3 -2,-1 z M832,21 l4,1 -1,5 -2,1 z" fill="#333"/>
<g fill="none" stroke="#333" stroke-width="1.3"><path d="M856,13 h-4.5 v14 h5"/><rect x="854.5" y="12.5" width="5" height="2.2"/><path d="M857.5,16.5 h6 l4,4 v7.5 h-10 z"/><path d="M863.5,16.5 v4 h4"/></g>
<circle cx="922.5" cy="20" r="2.3" fill="#222"/>
<rect x="921.7" y="12" width="1.6" height="1.6" fill="#222"/>
<rect x="921.7" y="15" width="1.6" height="1.6" fill="#222"/>
<rect x="921.7" y="25" width="1.6" height="1.6" fill="#222"/>
<rect x="921.7" y="28" width="1.6" height="1.6" fill="#222"/>
<path d="M983.5,18.5 h4 l4,-7 q3,0 2.5,3.5 l-1,3.5 h5.5 q2,0.5 1.5,3 l-2,6.5 q-1,1.5 -3,1.5 h-11.5 z" fill="none" stroke="#333" stroke-width="1.4" stroke-linejoin="round"/><path d="M988,18.5 v10" stroke="#333" stroke-width="1.2"/>
<text x="1514" y="28" font-family="Liberation Sans" font-size="17" fill="#555">{</text><text x="1528" y="28" font-family="Liberation Sans" font-size="17" fill="#555">}</text><path d="M1520,21 l3,3.5 l5,-6" fill="none" stroke="#555" stroke-width="2.2"/>
<path d="M1549,29 q2,-2 2,-7 q0,-6 6,-6 q6,0 6,6 q0,5 2,7 z M1555,29.5 a2.5,2 0 0 0 5,0 z" fill="#666"/>
<rect x="1557" y="6" width="16" height="15" rx="2.5" fill="#1c56b0"/><text x="1559" y="18" font-family="Liberation Sans" font-weight="bold" font-size="10.5" fill="#fff">9+</text>
<rect x="1581.5" y="13.5" width="15" height="17" rx="1.5" fill="none" stroke="#666" stroke-width="1.4"/>
<path d="M1584,17.5 l1.3,1.5 l2,-2.5" fill="none" stroke="#666" stroke-width="1"/><rect x="1589" y="17.5" width="5" height="1.8" fill="#666"/>
<path d="M1584,21.5 l1.3,1.5 l2,-2.5" fill="none" stroke="#666" stroke-width="1"/><rect x="1589" y="21.5" width="5" height="1.8" fill="#666"/>
<path d="M1584,25.5 l1.3,1.5 l2,-2.5" fill="none" stroke="#666" stroke-width="1"/><rect x="1589" y="25.5" width="5" height="1.8" fill="#666"/>
<g fill="none" stroke="#666" stroke-width="1.4"><rect x="1612.5" y="13.5" width="6" height="6"/><rect x="1612.5" y="23" width="6" height="7"/><rect x="1622" y="23" width="7.5" height="7"/></g><path d="M1625.5,13 v8 M1621.5,17 h8" stroke="#666" stroke-width="1.8"/>
<path d="M1646,22 q-1,-9 7,-9 q8,0 8,8 l1,2 -1.5,0.5 v3 q0,1.5 -2,1.5 h-2 v2 h-8 v-3 q-3,-2 -2.5,-5 z" fill="#666"/><circle cx="1652" cy="21" r="2" fill="#ddd"/><circle cx="1656.5" cy="17" r="1.3" fill="#ddd"/>
<circle cx="1752" cy="22" r="9" fill="#777"/><text x="1752" y="27.5" text-anchor="middle" font-family="Liberation Sans" font-weight="bold" font-size="14" fill="#fff">?</text>
<polygon points="1769,19.5 1777,19.5 1773,23.5" fill="#333"/>
<rect x="1789.5" y="10" width="24" height="24" rx="1.5" fill="#0b0b0b"/><polygon points="1801.5,12.5 1810,17 1810,27 1801.5,31.5 1793,27 1793,17" fill="none" stroke="#17a3b6" stroke-width="1.6"/><path d="M1806,17.5 l-7,3 l7,3 l-7,3.5" fill="none" stroke="#17a3b6" stroke-width="1.6"/>
<polygon points="1906,18 1914,18 1910,22.5" fill="#333"/></svg><svg class="a" style="left:0;top:0;pointer-events:none" width="1919" height="1079" viewBox="0 0 1919 1079"><g fill="none" stroke="#333" stroke-width="2"><circle cx="14" cy="52.5" r="3.2"/><path d="M14,56 v10 M14,63 q0,-3 4,-3 h3"/></g><circle cx="14" cy="66" r="2" fill="#333"/><circle cx="21" cy="60" r="1.8" fill="#333"/>
<rect x="20" y="50.5" width="10" height="2.3" fill="#333"/>
<rect x="22" y="55" width="8" height="2.3" fill="#333"/>
<rect x="22" y="59.5" width="8" height="2.3" fill="#333"/>
<rect x="22" y="64.5" width="8" height="2.3" fill="#333"/>
<path d="M51,57.5 l5.5,-5 v3 q7,0 7,7.5 q-2,-3.5 -7,-3.5 v3 z" fill="#333"/>
<path d="M98,57.5 l-5.5,-5 v3 q-7,0 -7,7.5 q2,-3.5 7,-3.5 v3 z" fill="#999"/>
<rect x="110.5" y="45" width="2" height="25" fill="#d3d3d3"/>
<rect x="199.5" y="45" width="2" height="25" fill="#d3d3d3"/>
<rect x="305.5" y="45" width="2" height="25" fill="#d3d3d3"/>
<rect x="549.5" y="45" width="2" height="25" fill="#d3d3d3"/>
<rect x="639.5" y="45" width="2" height="25" fill="#d3d3d3"/>
<rect x="729.5" y="45" width="2" height="25" fill="#d3d3d3"/>
<rect x="937.5" y="45" width="2" height="25" fill="#d3d3d3"/>
<rect x="1213.5" y="45" width="2" height="25" fill="#d3d3d3"/>
<rect x="1387.5" y="45" width="2" height="25" fill="#d3d3d3"/>
<rect x="1629.5" y="45" width="2" height="25" fill="#d3d3d3"/>
<rect x="1667.5" y="45" width="2" height="25" fill="#d3d3d3"/>
<path d="M123,65 l1,-4.5 l10,-10 l3.5,3.5 l-10,10 z" fill="none" stroke="#333" stroke-width="1.2"/><rect x="121" y="66.5" width="18" height="1.2" fill="#1c56b0"/>
<g transform="translate(210,49)" fill="none" stroke="#333" stroke-width="1.2" stroke-linejoin="round"><rect x="0.5" y="0.5" width="17" height="17" rx="1.5"/><path d="M0.5,2 l2.5,2 h13" /><path d="M3,4 v13"/><rect x="6" y="8" width="11.5" height="9.5" fill="#999"/><path d="M6,8 l1.5,1.5 h10"/></g>
<g transform="translate(244,49)" fill="none" stroke="#333" stroke-width="1.2" stroke-linejoin="round"><path d="M9,0.5 a8.5,8.5 0 1 0 6,14.5 l-5,-4 a3,3 0 0 1 0,-3.5 l5,-4 a8.5,8.5 0 0 0 -6,-3" fill="#999"/><path d="M1,9 h17" stroke-dasharray="2 1.5" stroke-width="1"/></g>
<g transform="translate(278,49)" fill="none" stroke="#333" stroke-width="1.2" stroke-linejoin="round"><path d="M1,16 q-1,-7 5,-9 l5,-2 q2,-1 2,-3 l5,1 q0,5 -5,7 l-5,2 q-2,1 -2,4 z" fill="#999"/><ellipse cx="15.5" cy="2.8" rx="2.8" ry="2" fill="#fff"/></g>
<g transform="translate(316,49)" fill="none" stroke="#333" stroke-width="1.2" stroke-linejoin="round"><path d="M0.5,17.5 v-10 q0,-7 7,-7 h9 l1,1 v16 z"/><path d="M0.5,7.5 q0.5,-5 6,-6 l1.5,1.5 q-5,1 -5.5,5.5 z" fill="#999"/><path d="M2.5,8 v9.5 M8,2 h9.5"/></g>
<path d="M345.5,55.5 l4.5,4.5 l4.5,-4.5" fill="none" stroke="#333" stroke-width="1.6"/>
<g transform="translate(368,49)" fill="none" stroke="#333" stroke-width="1.2" stroke-linejoin="round"><path d="M0.5,17.5 v-11 l6,-6 h10 l1,1 v16 z"/><path d="M0.5,6.5 l6,-6 l1.5,1.5 l-6,6 z" fill="#999"/><path d="M2,8 v9.5 M8,2 h9.5"/></g>
<g transform="translate(402,49)" fill="none" stroke="#333" stroke-width="1.2" stroke-linejoin="round"><rect x="0.5" y="0.5" width="17" height="17" rx="1.5"/><path d="M0.5,2 l2.5,2 v13.5 M3,4 h13"/><path d="M5,3 h9 v11 h-9 z" fill="#999" stroke="none"/><path d="M5,3 v11 h9 v-11"/></g>
<g transform="translate(436,49)" fill="none" stroke="#333" stroke-width="1.2" stroke-linejoin="round"><rect x="0.5" y="0.5" width="17" height="17" rx="1.5"/><path d="M0.5,2 l2.5,2 v13.5 M3,4 h13"/><circle cx="10" cy="10.5" r="5" fill="#999"/></g>
<g transform="translate(473,49)" fill="none" stroke="#333" stroke-width="1.2" stroke-linejoin="round"><path d="M0.5,3 v12 a6,2.5 0 0 0 12,0 v-12"/><ellipse cx="6.5" cy="3" rx="6" ry="2.5"/><path d="M1,6 h11 M1,8 h11 M1,10 h11 M1,12 h11" stroke="#888" stroke-width="1"/></g>
<g transform="translate(504,50)" fill="none" stroke="#333" stroke-width="1.2" stroke-linejoin="round"><path d="M0.5,5 l6,-4 q5,2 11,0 v12 l-9,4 l-8,-3 z" fill="#999"/><path d="M0.5,5 l8,3 l9,-4 M8.5,8 v9"/><path d="M12.5,5 v7 M10,10 l2.5,3 l2.5,-3" stroke="#111" stroke-width="1.6"/></g>
<path d="M533.5,55.5 l4.5,4.5 l4.5,-4.5" fill="none" stroke="#333" stroke-width="1.6"/>
<g transform="translate(560,49)" fill="none" stroke="#333" stroke-width="1.2" stroke-linejoin="round"><rect x="0.5" y="0.5" width="8" height="8" fill="#fff"/><rect x="9.5" y="0.5" width="8" height="8" fill="#999"/><rect x="0.5" y="9.5" width="8" height="8" fill="#999"/><rect x="9.5" y="9.5" width="8" height="8" fill="#999"/></g>
<path d="M589.5,55.5 l4.5,4.5 l4.5,-4.5" fill="none" stroke="#333" stroke-width="1.6"/>
<g transform="translate(612,49)" fill="none" stroke="#333" stroke-width="1.2" stroke-linejoin="round"><path d="M0.5,2 l2,-1.5 h3 l1.5,2 v10 l2,3 v2 h-8.5 l-1,-1 z"/><path d="M11,17.5 v-15 l2,-2 h3 l1.5,2 v15 z" fill="#999"/><path d="M6.5,3 l2,-1.5 v15" stroke="#bbb"/></g>
<g transform="translate(650,51)" fill="none" stroke="#333" stroke-width="1.2" stroke-linejoin="round"><circle cx="6" cy="7" r="6"/><circle cx="12" cy="7" r="6" fill="#999"/><path d="M9,2 a6,6 0 0 0 0,10" fill="#777"/></g>
<g transform="translate(684,49)" fill="none" stroke="#333" stroke-width="1.2" stroke-linejoin="round"><rect x="0.5" y="9" width="8" height="8.5"/><path d="M12,1 l4.5,5 l-4.5,5 l-4.5,-5 z" fill="#999"/><path d="M3,7 q0,-5 5,-6" /><path d="M16,11 l-3,6"/></g>
<path d="M713.5,55.5 l4.5,4.5 l4.5,-4.5" fill="none" stroke="#333" stroke-width="1.6"/>
<g transform="translate(741,49)" fill="none" stroke="#333" stroke-width="1.2" stroke-linejoin="round"><path d="M0.5,0.5 l16,3 v14 l-16,-3 z" fill="#ddd"/><path d="M8.5,2 v7 l8,1.5"/></g>
<g transform="translate(774,49)" fill="none" stroke="#333" stroke-width="1.2" stroke-linejoin="round"><circle cx="9" cy="9" r="8.5"/><circle cx="9" cy="9" r="6.5"/><path d="M9,3.5 v5.5 h5.5"/></g>
<g transform="translate(808,49)" fill="none" stroke="#333" stroke-width="1.2" stroke-linejoin="round"><path d="M0.5,10 h4 v-4 h5 v-5 h6 l2,2 v14.5 h-14 l-3,-3 z"/><path d="M0.5,10 l3,3 h14 M3.5,13 v4.5 M4.5,6 l3,3 h10"/><path d="M1,1 q5,0 7,4 l-2,1 l5,2 l-1,-5 l-1.5,1" fill="#333"/></g>
<text x="840" y="64" font-family="Liberation Serif" font-style="italic" font-weight="bold" font-size="17" fill="#333">(<tspan font-size="16">x</tspan>)</text>
<text x="875" y="64" font-family="Liberation Sans" font-size="17" fill="#333">(</text><text x="889" y="64" font-family="Liberation Sans" font-size="17" fill="#333">)</text><circle cx="884" cy="57" r="3.2" fill="none" stroke="#333" stroke-width="1.3"/><path d="M886.5,59.5 l2.5,2.5" stroke="#333" stroke-width="1.5"/>
<path d="M914,53 l5,-2.75 l5,2.75 v5.5 l-5,2.75 l-5,-2.75 z M914,53 l5,2.75 l5,-2.75 M919,55.75 v5.5" fill="#fff" stroke="#555" stroke-width="1"/><path d="M909.5,60 l5,-2.75 l5,2.75 v5.5 l-5,2.75 l-5,-2.75 z M909.5,60 l5,2.75 l5,-2.75 M914.5,62.75 v5.5" fill="#fff" stroke="#555" stroke-width="1"/><path d="M919.5,60 l5,-2.75 l5,2.75 v5.5 l-5,2.75 l-5,-2.75 z M919.5,60 l5,2.75 l5,-2.75 M924.5,62.75 v5.5" fill="#fff" stroke="#555" stroke-width="1"/>
<path d="M949.5,53 l8,-4 l8,4 v9 l-8,4.5 l-8,-4.5 z" fill="#ddd" stroke="#333" stroke-width="1.2"/><path d="M949.5,53 l8,4 l8,-4 M957.5,57 v9.5" fill="none" stroke="#333" stroke-width="1.1"/><path d="M957.5,57 l8,-4 v9 l-8,4.5 z" fill="#bbb"/>
<g transform="translate(982,49)"><path d="M1,6 l16,-2 l2,10 l-16,3 z" fill="#222"/><circle cx="7" cy="10.5" r="2.6" fill="none" stroke="#fff" stroke-width="1"/><circle cx="13" cy="9.5" r="2.6" fill="none" stroke="#fff" stroke-width="1"/><path d="M6,1 h6 M9,0 v5" stroke="#222" stroke-width="1.2"/></g>
<g fill="none" stroke="#999" stroke-width="1.2"><circle cx="1021" cy="54" r="3.5"/><circle cx="1029" cy="62" r="2.2"/><path d="M1018,57 l9,7 M1024,52 l7,8"/></g>
<g transform="translate(1049,49)"><path d="M1,6 l16,-2 l2,10 l-16,3 z" fill="#222"/><circle cx="7" cy="10.5" r="2.6" fill="none" stroke="#fff" stroke-width="1"/><circle cx="13" cy="9.5" r="2.6" fill="none" stroke="#fff" stroke-width="1"/><path d="M6,1 h6 M9,0 v5" stroke="#222" stroke-width="1.2"/></g>
<g transform="translate(1084,49)"><path d="M0.5,2 l2,-1.5 h14 v15 l-2,2 h-14 z" fill="#fff" stroke="#444" stroke-width="1"/><rect x="3" y="2.5" width="6.5" height="7" fill="#aaa"/><rect x="9.5" y="2.5" width="6.5" height="7" fill="#888"/><rect x="3" y="9.5" width="6.5" height="7.5" fill="#888"/><rect x="9.5" y="9.5" width="6.5" height="7.5" fill="#777"/></g>
<g transform="translate(1117,49)" fill="#666"><circle cx="10" cy="8.5" r="6.5" fill="none" stroke="#666" stroke-width="3.2"/><rect x="0" y="16" width="20" height="2.5"/><path d="M0,0 l4,0 l3,4 l-2,2 z M20,0 l-4,0 l-3,4 l2,2 z"/></g>
<polygon points="1170.9,56.4 1170.9,59.6 1168.0,59.7 1167.1,61.8 1169.1,63.9 1166.9,66.1 1164.8,64.1 1162.7,65.0 1162.6,67.9 1159.4,67.9 1159.3,65.0 1157.2,64.1 1155.1,66.1 1152.9,63.9 1154.9,61.8 1154.0,59.7 1151.1,59.6 1151.1,56.4 1154.0,56.3 1154.9,54.2 1152.9,52.1 1155.1,49.9 1157.2,51.9 1159.3,51.0 1159.4,48.1 1162.6,48.1 1162.7,51.0 1164.8,51.9 1166.9,49.9 1169.1,52.1 1167.1,54.2 1168.0,56.3" fill="#888" stroke="#222" stroke-width="1.2"/><circle cx="1161" cy="58" r="3" fill="#fff" stroke="#222" stroke-width="1"/>
<g transform="translate(1188,49)"><path d="M2,1 h14 l-7,9 z" fill="#999"/><path d="M2,1 l7,9 l7,-9" fill="none" stroke="#444" stroke-width="1.2"/><path d="M9,10 v4" stroke="#444" stroke-width="1.5"/><rect x="1" y="14" width="16" height="2" fill="#888"/><rect x="1" y="17" width="16" height="1.5" fill="#666"/></g>
<g transform="translate(1223,48)"><path d="M3,11 l7,-7 l8,8 l-7,7 z" fill="none" stroke="#333" stroke-width="1.2"/><path d="M2,12 h16 l-7,7 z" fill="#333"/><path d="M4,1 l7,7 M8,2 l6,6" stroke="#333" stroke-width="1.2"/><path d="M18,14 q2,3 0,5 q-2,-1 0,-5" fill="#333"/></g>
<rect x="1257.5" y="48.5" width="19" height="19" rx="3" fill="#fff" stroke="#888" stroke-width="1"/>
<text x="1267" y="63" text-anchor="middle" font-family="Liberation Sans" font-size="10.5" fill="#333" textLength="16" lengthAdjust="spacingAndGlyphs">SM</text>
<rect x="1325.5" y="48.5" width="19" height="19" rx="3" fill="#fff" stroke="#888" stroke-width="1"/>
<text x="1335" y="63" text-anchor="middle" font-family="Liberation Sans" font-size="12" fill="#333" >Ai</text>
<rect x="1359.5" y="48.5" width="19" height="19" rx="3" fill="#fff" stroke="#888" stroke-width="1"/>
<text x="1369" y="63" text-anchor="middle" font-family="Liberation Sans" font-size="12" fill="#333" >Ds</text>
<g transform="translate(1291,49) rotate(-6 10 9)"><rect x="0.5" y="3" width="19" height="13" rx="2" fill="#fff" stroke="#333" stroke-width="2"/><rect x="1" y="3.5" width="18" height="4" fill="#333"/><rect x="1" y="13" width="18" height="2.5" fill="#333"/></g>
<g transform="translate(1397,49)" stroke="#333" stroke-width="1.1"><path d="M0.5,2 h6 v11 l4,4.5 h-8 l-2,-2.5 z" fill="#ddd"/><path d="M10,0.5 l4,0 l4,4.5 v12 h-7 v-12 z" fill="#ccc"/><path d="M6.5,13 h5 l6,4.5" fill="#999"/></g>
<g transform="translate(1432,49)" stroke="#333" stroke-width="1.1"><path d="M0.5,11 h9 l5,6.5 h-9 z" fill="#ddd"/><path d="M9.5,11 v-10.5 l5,5 v12 z" fill="#999"/></g>
<g transform="translate(1465,49)" stroke="#333" stroke-width="1.1"><path d="M0.5,9 h9 l2,5 h-7 z" fill="#ddd"/><path d="M9.5,9 l5,-5 l5,5 l-5,5 z" fill="#bbb"/><path d="M4,1 l14,16" stroke-width="1"/></g>
<g transform="translate(1501,49)" stroke="#333" stroke-width="1.1"><path d="M5,0.5 h11 v17 h-15 v-6 h6 v-3 h-2 q-4,0 -4,-4 q0,-4 4,-4 z" fill="#ccc"/><path d="M5,0.5 h5 v17 h-9 v-6 h6 v-3 h-2 q-4,0 -4,-4 q0,-4 4,-4 z" fill="#999" stroke="none"/><path d="M5,0.5 h11 v17 h-15 v-6 h6 v-3 h-2 q-4,0 -4,-4 q0,-4 4,-4 z" fill="none"/></g>
<g transform="translate(1534,49)"><rect x="1" y="1" width="17" height="17" fill="#e6e6e6"/><path d="M1,1 h7 l-7,7 z" fill="#999"/><path d="M1,18 v-10 l7,-7 h10" fill="none" stroke="#333" stroke-width="1.2"/></g>
<g transform="translate(1568,49)" stroke="#333" stroke-width="1.1" fill="none"><rect x="0.5" y="1" width="16" height="16.5" rx="2"/><path d="M3,1 v16.5 M3,9 h6 M8,9 l8,7" /><path d="M8,5 l3,3 l6,-7" stroke-width="2.2"/></g>
<g transform="translate(1602,49)" stroke="#333" stroke-width="1.2" fill="none"><path d="M0,0.5 h17 v6 h-10 q-4,0 -4,4 q0,4 4,4 h4 v4 M14,14.5 v4"/></g>
<rect x="1639.5" y="48.5" width="19" height="19" rx="3" fill="none" stroke="#333" stroke-width="1.3" stroke-dasharray="3.5 2.5"/><path d="M1649,54 v8 M1645,58 h8" stroke="#222" stroke-width="2"/>
<text x="1676" y="64" font-family="Liberation Sans" font-size="16" fill="#444">{</text><text x="1690" y="66" font-family="Liberation Sans" font-size="16" fill="#444">}</text><path d="M1681,56 l5.5,-3.0250000000000004 l5.5,3.0250000000000004 v6.050000000000001 l-5.5,3.0250000000000004 l-5.5,-3.0250000000000004 z M1681,56 l5.5,3.0250000000000004 l5.5,-3.0250000000000004 M1686.5,59.025 v6.050000000000001" fill="#fff" stroke="#555" stroke-width="1.1"/><circle cx="1692" cy="51" r="2" fill="#333"/>
<path d="M1701.5,55.5 l4.5,4.5 l4.5,-4.5" fill="none" stroke="#333" stroke-width="1.6"/>
<rect x="1734" y="42" width="159" height="31" rx="4" fill="#eeeeee"/>
<rect x="1833.5" y="49.5" width="32" height="19" rx="2" fill="#fafafa" stroke="#aaa" stroke-width="1"/><rect x="1866.5" y="49.5" width="16" height="19" rx="2" fill="#fafafa" stroke="#aaa" stroke-width="1"/></svg><svg class="a" style="left:0;top:0;pointer-events:none" width="1919" height="1079" viewBox="0 0 1919 1079"><rect x="0" y="40" width="40" height="1" fill="#dcdcdc"/><rect x="0" y="216" width="39" height="1" fill="#dcdcdc"/>
<rect x="15" y="84" width="2" height="2" fill="#333"/>
<rect x="15" y="87" width="2" height="2" fill="#333"/>
<rect x="15" y="97" width="2" height="2" fill="#333"/>
<rect x="15" y="100" width="2" height="2" fill="#333"/>
<circle cx="16" cy="92.5" r="3" fill="#333"/><path d="M25,89.5 v11 M19.5,95 h11" stroke="#1c56b0" stroke-width="2.2"/>
<ellipse cx="20" cy="125.5" rx="10" ry="6.5" fill="#333"/><path d="M13,129 l-2,7 l7,-5 z" fill="#333"/>
<rect x="13" y="154.5" width="13" height="17" rx="1.5" fill="none" stroke="#333" stroke-width="1.5"/><path d="M15.5,158 h7 M15.5,161.5 h6 M15.5,165 h4" stroke="#333" stroke-width="1.5"/><path d="M20,168 l8,-8 l1.5,1.5 l-8,8 l-2,0.5 z" fill="#333"/>
<circle cx="22" cy="198.5" r="6.5" fill="none" stroke="#333" stroke-width="1.8"/><path d="M19,190 h6 M22,190 v2 M22,198.5 l2.5,-3" stroke="#333" stroke-width="1.5"/><path d="M11,196 h5 M12,199.5 h4 M13,203 h3" stroke="#333" stroke-width="1.2"/>
<rect x="12.5" y="225.5" width="15" height="17" rx="1.5" fill="none" stroke="#333" stroke-width="1.5"/>
<path d="M15,229.5 l1.3,1.5 l2.2,-2.7" fill="none" stroke="#333" stroke-width="1"/><rect x="20" y="229" width="5" height="2" fill="#333"/>
<path d="M15,233.5 l1.3,1.5 l2.2,-2.7" fill="none" stroke="#333" stroke-width="1"/><rect x="20" y="233" width="5" height="2" fill="#333"/>
<path d="M15,237.5 l1.3,1.5 l2.2,-2.7" fill="none" stroke="#333" stroke-width="1"/><rect x="20" y="237" width="5" height="2" fill="#333"/>
<path d="M51,93 h15 l-6,7 v7.5 l-3,-2.5 v-5 z" fill="none" stroke="#333" stroke-width="1.3" stroke-linejoin="round"/>
<path d="M146.5,123.5 h5 l1.5,2 h10.5 v11 h-17 z" fill="none" stroke="#333" stroke-width="1.2"/><rect x="144" y="128" width="9" height="9" fill="#fff"/><path d="M150,129 v7.5 M146,132.5 h8" stroke="#1c56b0" stroke-width="1.8"/>
<rect x="179" y="124" width="3.5" height="13" fill="#2a2a2a"/><rect x="187.5" y="124" width="3.5" height="13" fill="#2a2a2a"/>
<circle cx="215" cy="131" r="6.8" fill="none" stroke="#333" stroke-width="1.5"/><path d="M212,122 h6 M215,122 v2 M215,131 l2.5,3" stroke="#333" stroke-width="1.4"/>
<path d="M44.5,154 l5.5,5.5 l5.5,-5.5" fill="none" stroke="#555" stroke-width="1.8"/>
<path d="M47,281.5 l5,5.5 l-5,5.5" fill="none" stroke="#555" stroke-width="1.8"/>
<path d="M47,307.5 l5,5.5 l-5,5.5" fill="none" stroke="#555" stroke-width="1.8"/>
<path d="M44.5,361.5 l5.5,5.5 l5.5,-5.5" fill="none" stroke="#555" stroke-width="1.8"/>
<path d="M47,645.5 l5,5.5 l-5,5.5" fill="none" stroke="#555" stroke-width="1.8"/>
<path d="M44.5,717 l5.5,5.5 l5.5,-5.5" fill="none" stroke="#555" stroke-width="1.8"/>
<rect x="49.5" y="170" width="1" height="104" fill="#cfcfcf"/><rect x="44" y="274" width="11" height="1" fill="#cfcfcf"/>
<rect x="49.5" y="378" width="1" height="182" fill="#cfcfcf"/><rect x="44" y="560" width="11" height="1" fill="#cfcfcf"/>
<circle cx="72.5" cy="183" r="3.5" fill="none" stroke="#666" stroke-width="1"/><circle cx="72.5" cy="183" r="1.6" fill="#666"/>
<path d="M66.5,202.5 l13,2 v12 l-13,-2 z" fill="#e6e6e6" stroke="#bdbdbd" stroke-width="1.1"/><path d="M73,203.5 v6 l6.5,1" fill="none" stroke="#bdbdbd" stroke-width="1.1"/>
<path d="M66.5,228.5 l13,2 v12 l-13,-2 z" fill="#e6e6e6" stroke="#bdbdbd" stroke-width="1.1"/><path d="M73,229.5 v6 l6.5,1" fill="none" stroke="#bdbdbd" stroke-width="1.1"/>
<path d="M66.5,254.5 l13,2 v12 l-13,-2 z" fill="#e6e6e6" stroke="#bdbdbd" stroke-width="1.1"/><path d="M73,255.5 v6 l6.5,1" fill="none" stroke="#bdbdbd" stroke-width="1.1"/>
<path d="M66,284 l7,-3.5 l7,3.5 v8 l-7,3.5 l-7,-3.5 z M66,284 l7,3.5 l7,-3.5 M73,287.5 v8" fill="#f0f0f0" stroke="#bbb" stroke-width="1.1"/>
<circle cx="200" cy="287" r="2.6" fill="#222"/>
<rect x="199.1" y="278" width="1.8" height="1.8" fill="#222"/>
<rect x="199.1" y="281" width="1.8" height="1.8" fill="#222"/>
<rect x="199.1" y="292" width="1.8" height="1.8" fill="#222"/>
<rect x="199.1" y="295" width="1.8" height="1.8" fill="#222"/>
<circle cx="200" cy="547" r="2.6" fill="#222"/>
<rect x="199.1" y="538" width="1.8" height="1.8" fill="#222"/>
<rect x="199.1" y="541" width="1.8" height="1.8" fill="#222"/>
<rect x="199.1" y="552" width="1.8" height="1.8" fill="#222"/>
<rect x="199.1" y="555" width="1.8" height="1.8" fill="#222"/>
<circle cx="200" cy="573" r="2.6" fill="#222"/>
<rect x="199.1" y="564" width="1.8" height="1.8" fill="#222"/>
<rect x="199.1" y="567" width="1.8" height="1.8" fill="#222"/>
<rect x="199.1" y="578" width="1.8" height="1.8" fill="#222"/>
<rect x="199.1" y="581" width="1.8" height="1.8" fill="#222"/>
<circle cx="200" cy="599" r="2.6" fill="#222"/>
<rect x="199.1" y="590" width="1.8" height="1.8" fill="#222"/>
<rect x="199.1" y="593" width="1.8" height="1.8" fill="#222"/>
<rect x="199.1" y="604" width="1.8" height="1.8" fill="#222"/>
<rect x="199.1" y="607" width="1.8" height="1.8" fill="#222"/>
<circle cx="200" cy="625" r="2.6" fill="#222"/>
<rect x="199.1" y="616" width="1.8" height="1.8" fill="#222"/>
<rect x="199.1" y="619" width="1.8" height="1.8" fill="#222"/>
<rect x="199.1" y="630" width="1.8" height="1.8" fill="#222"/>
<rect x="199.1" y="633" width="1.8" height="1.8" fill="#222"/>
<path d="M66.5,307.0 h5 l1.5,2 h8.5 v9.5 h-15 z" fill="none" stroke="#888" stroke-width="1.1"/>
<path d="M66.5,359.0 h5 l1.5,2 h8.5 v9.5 h-15 z" fill="none" stroke="#888" stroke-width="1.1"/>
<path d="M66.5,645.0 h5 l1.5,2 h8.5 v9.5 h-15 z" fill="none" stroke="#bbb" stroke-width="1.1"/>
<path d="M47.5,344 l1,-4 l8.5,-8.5 l3,3 l-8.5,8.5 z" fill="none" stroke="#aaa" stroke-width="1"/><rect x="46" y="345.2" width="15" height="1" fill="#9bb0d6"/>
<path d="M66.5,396 l1,-4 l8.5,-8.5 l3,3 l-8.5,8.5 z" fill="none" stroke="#aaa" stroke-width="1"/><rect x="65" y="397.2" width="15" height="1" fill="#9bb0d6"/>
<path d="M66.5,448 l1,-4 l8.5,-8.5 l3,3 l-8.5,8.5 z" fill="none" stroke="#aaa" stroke-width="1"/><rect x="65" y="449.2" width="15" height="1" fill="#9bb0d6"/>
<g transform="translate(65,409)" fill="none" stroke="#444" stroke-width="1"><rect x="0.5" y="0.5" width="14" height="14" rx="1.5"/><path d="M0.5,2 l2,1.5 h11 M2.5,3.5 v11"/><rect x="5" y="6" width="9.5" height="8.5" fill="#888"/></g>
<g transform="translate(65,461)" fill="none" stroke="#444" stroke-width="1"><rect x="0.5" y="0.5" width="14" height="14" rx="1.5"/><path d="M0.5,2 l2,1.5 h11 M2.5,3.5 v11"/><rect x="5" y="6" width="9.5" height="8.5" fill="#888"/></g>
<g transform="translate(65,513)" fill="none" stroke="#bbb" stroke-width="1.1"><path d="M0.5,14.5 v-8 q0,-6 6,-6 h7 l1,1 v13 z"/><path d="M2.5,7 v7.5 M7,2.5 h7.5"/></g>
<g transform="translate(65,539)"><path d="M0.5,5 l14,-1 l1,10 l-14,1 z" fill="#999"/><circle cx="5" cy="9.5" r="2.2" fill="none" stroke="#fff" stroke-width="1"/><circle cx="10.5" cy="9" r="2.2" fill="none" stroke="#fff" stroke-width="1"/><path d="M5,1 h6 M8,0 v4" stroke="#999" stroke-width="1.1"/></g>
<g transform="translate(46,591)"><path d="M0.5,5 l14,-1 l1,10 l-14,1 z" fill="#999"/><circle cx="5" cy="9.5" r="2.2" fill="none" stroke="#fff" stroke-width="1"/><circle cx="10.5" cy="9" r="2.2" fill="none" stroke="#fff" stroke-width="1"/><path d="M5,1 h6 M8,0 v4" stroke="#999" stroke-width="1.1"/></g>
<g transform="translate(46,617)"><path d="M0.5,5 l14,-1 l1,10 l-14,1 z" fill="#999"/><circle cx="5" cy="9.5" r="2.2" fill="none" stroke="#fff" stroke-width="1"/><circle cx="10.5" cy="9" r="2.2" fill="none" stroke="#fff" stroke-width="1"/><path d="M5,1 h6 M8,0 v4" stroke="#999" stroke-width="1.1"/></g>
<g fill="none" stroke="#bbb" stroke-width="1"><circle cx="51" cy="569" r="3.5"/><circle cx="58" cy="577" r="2.5"/><path d="M48,572 l8,7 M54,567 l6,8"/></g>
<g transform="translate(65,739)" fill="none" stroke="#aaa" stroke-width="1.1" stroke-linejoin="round"><path d="M7.2,0.5 H11.3 L14.6,3.7 V14.8 H3.5 L0.2,10.6 V7.4 H7.2 Z M7.2,0.5 L10.4,3.7 H14.6 M10.4,3.7 V10.2 H3.5 L0.2,7.4 M3.5,10.2 V14.8"/></g>
<g transform="translate(65,765)" fill="none" stroke="#666" stroke-width="1.1" stroke-linejoin="round"><path d="M7.2,0.5 H11.3 L14.6,3.7 V14.8 H3.5 L0.2,10.6 V7.4 H7.2 Z M7.2,0.5 L10.4,3.7 H14.6 M10.4,3.7 V10.2 H3.5 L0.2,7.4 M3.5,10.2 V14.8"/></g>
<g transform="translate(65,791)" fill="none" stroke="#666" stroke-width="1.1" stroke-linejoin="round"><path d="M7.2,0.5 H11.3 L14.6,3.7 V14.8 H3.5 L0.2,10.6 V7.4 H7.2 Z M7.2,0.5 L10.4,3.7 H14.6 M10.4,3.7 V10.2 H3.5 L0.2,7.4 M3.5,10.2 V14.8"/></g>
<g transform="translate(65,817)" fill="none" stroke="#666" stroke-width="1.1" stroke-linejoin="round"><path d="M7.2,0.5 H11.3 L14.6,3.7 V14.8 H3.5 L0.2,10.6 V7.4 H7.2 Z M7.2,0.5 L10.4,3.7 H14.6 M10.4,3.7 V10.2 H3.5 L0.2,7.4 M3.5,10.2 V14.8"/></g>
<g transform="translate(65,843)" fill="none" stroke="#666" stroke-width="1.1" stroke-linejoin="round"><path d="M7.2,0.5 H11.3 L14.6,3.7 V14.8 H3.5 L0.2,10.6 V7.4 H7.2 Z M7.2,0.5 L10.4,3.7 H14.6 M10.4,3.7 V10.2 H3.5 L0.2,7.4 M3.5,10.2 V14.8"/></g>
<g transform="translate(65,869)" fill="none" stroke="#666" stroke-width="1.1" stroke-linejoin="round"><path d="M7.2,0.5 H11.3 L14.6,3.7 V14.8 H3.5 L0.2,10.6 V7.4 H7.2 Z M7.2,0.5 L10.4,3.7 H14.6 M10.4,3.7 V10.2 H3.5 L0.2,7.4 M3.5,10.2 V14.8"/></g>
<g transform="translate(65,895)" fill="none" stroke="#666" stroke-width="1.1" stroke-linejoin="round"><path d="M7.2,0.5 H11.3 L14.6,3.7 V14.8 H3.5 L0.2,10.6 V7.4 H7.2 Z M7.2,0.5 L10.4,3.7 H14.6 M10.4,3.7 V10.2 H3.5 L0.2,7.4 M3.5,10.2 V14.8"/></g>
<rect x="245.5" y="538.5" width="32" height="33" fill="#fff" stroke="#c8c8c8" stroke-width="1"/>
<path d="M255.5,547 v16 M258.5,549 h11 M258.5,553.5 h11 M258.5,558 h11 M258.5,562.5 h11" stroke="#444" stroke-width="1.2"/><path d="M253,546.5 l2.5,2.5 l2.5,-2.5" fill="none" stroke="#444" stroke-width="1"/>
<rect x="10" y="1058" width="13" height="9" rx="1" fill="#333"/><circle cx="21" cy="1066" r="4.5" fill="#f8f8f8" stroke="#333" stroke-width="1.8"/><path d="M24,1069 l4,4" stroke="#333" stroke-width="2"/></svg><svg class="a" style="left:0;top:0;pointer-events:none" width="1919" height="1079" viewBox="0 0 1919 1079"><rect x="1888.5" y="433.5" width="40" height="132" fill="#fff" stroke="#bdbdbd" stroke-width="1"/>
<rect x="1889" y="466.5" width="30" height="1" fill="#c8c8c8"/>
<rect x="1889" y="499.5" width="30" height="1" fill="#c8c8c8"/>
<rect x="1889" y="532.5" width="30" height="1" fill="#c8c8c8"/>
<rect x="1888.5" y="576.5" width="40" height="99" fill="#fff" stroke="#bdbdbd" stroke-width="1"/>
<rect x="1889" y="609.5" width="30" height="1" fill="#c8c8c8"/>
<rect x="1889" y="642.5" width="30" height="1" fill="#c8c8c8"/>
<g transform="translate(1895,441)"><path d="M2,12 l8,-11 l4,2 l-6,10 z" fill="#777"/><path d="M6,13 l9,-9 l3,3 l-7,7 z" fill="#aaa"/><rect x="0.5" y="12.5" width="19" height="6" rx="2" fill="#fff" stroke="#666" stroke-width="1"/><rect x="14" y="13" width="5" height="5" fill="#ccc"/><circle cx="3.5" cy="15.5" r="1" fill="#666"/></g>
<rect x="1895" y="474" width="10" height="8" fill="#1c56b0"/><rect x="1898.3" y="474" width="0.8" height="8" fill="#fff"/><rect x="1901.6" y="474" width="0.8" height="8" fill="#fff"/><rect x="1895" y="478" width="10" height="0.8" fill="#fff"/><path d="M1901,481 l6,-3 l7,3 v8 l-6,4 l-7,-4 z M1901,481 l7,3.5 l6,-3.5 M1908,484.5 v8.5" fill="none" stroke="#333" stroke-width="1.1"/>
<rect x="1895" y="507" width="10" height="8" fill="#333"/><rect x="1898.3" y="507" width="0.8" height="8" fill="#fff"/><rect x="1901.6" y="507" width="0.8" height="8" fill="#fff"/><rect x="1895" y="511" width="10" height="0.8" fill="#fff"/><path d="M1900,515 l6,-3 l6,3 v6 l-6,3 l-6,-3 z M1900,515 l6,3 l6,-3 M1906,518 v6" fill="#fff" stroke="#333" stroke-width="1"/><path d="M1898,514 q-1,0 -1,3 v7 q0,2 2,2 M1913,510 q2,0 2,3 v8 q0,3 -2,3" fill="none" stroke="#333" stroke-width="1"/>
<rect x="1895" y="540" width="10" height="8" fill="#333"/><rect x="1898.3" y="540" width="0.8" height="8" fill="#fff"/><rect x="1901.6" y="540" width="0.8" height="8" fill="#fff"/><rect x="1895" y="544" width="10" height="0.8" fill="#fff"/><text x="1894" y="558" font-family="Liberation Serif" font-style="italic" font-weight="bold" font-size="15" fill="#333">(x)</text>
<rect x="1893" y="581" width="23" height="22" rx="3" fill="#ddd"/><g transform="translate(1896,584)"><path d="M0.5,6 l15,-2 l1.5,9 l-15,2 z" fill="#222"/><circle cx="6" cy="10" r="2.4" fill="#3b8de0"/><circle cx="11.5" cy="9.3" r="2.4" fill="#3b8de0"/><path d="M5,1 h7 M8.5,0 v4" stroke="#3b6ec0" stroke-width="1.2"/></g>
<rect x="1894.5" y="615.5" width="21" height="21" rx="1" fill="#4caf50" stroke="#8ccf8c" stroke-width="1"/><path d="M1897,620 q4,-1.5 7.5,0.5 v12.5 q-3.5,-2 -7.5,-0.5 z M1905.5,620.5 q3.5,-2 7.5,-0.5 v12.5 q-4,-1.5 -7.5,0.5 z" fill="#fff"/>
<rect x="1894.5" y="648.5" width="21" height="21" rx="1" fill="#1d5fd0" stroke="#0a2a6a" stroke-width="1.5"/><path d="M1897,653 q4,-1.5 7.5,0.5 v12.5 q-3.5,-2 -7.5,-0.5 z M1905.5,653.5 q3.5,-2 7.5,-0.5 v12.5 q-4,-1.5 -7.5,0.5 z" fill="#fff"/>
<polygon points="1822,101 1838,101 1830,91" fill="#9a9a9a"/>
<polygon points="1822,230 1838,230 1830,240" fill="#9a9a9a"/>
<polygon points="1755,166 1765,158 1765,174" fill="#9a9a9a"/>
<polygon points="1905,166 1895,158 1895,174" fill="#9a9a9a"/>
<path d="M1808,101 q-17,6 -27,17" fill="none" stroke="#9a9a9a" stroke-width="3.5"/><polygon points="1775,126 1777,112 1788,120" fill="#9a9a9a"/>
<path d="M1851,101 q17,6 27,17" fill="none" stroke="#9a9a9a" stroke-width="3.5"/><polygon points="1885,126 1883,112 1872,120" fill="#9a9a9a"/>
<path d="M1795,135 L1825,126 L1862,136 L1866,172 L1845,206 L1833,210 L1793,194 Z" fill="#e8ebee" stroke="#e8ebee" stroke-width="7" stroke-linejoin="round"/>
<path d="M1806,134 q0,-3 4,-4 l14,-4 q3,-1 6,0 l18,5 q4,1 1,3 l-16,8 q-4,2 -8,1 l-18,-5 q-2,-1 -1,-4 z" fill="#fafbfc"/>
<path d="M1797,160 q0,-7 7,-6 l17,4 q6,2 6,8 v22 q0,7 -7,5 l-16,-5 q-7,-2 -7,-9 z" fill="#fafbfc"/>
<path d="M1836,162 q0,-4 3,-6 l16,-10 q5,-3 5,2 v20 q0,4 -3,7 l-15,14 q-6,4 -6,-3 z" fill="#fafbfc"/>
<text x="1816" y="186" text-anchor="middle" font-family="Liberation Sans" font-size="11.5" fill="#222" transform="rotate(10 1816 182)">Left</text>
<text x="1851" y="178" text-anchor="middle" font-family="Liberation Sans" font-style="italic" font-size="10" fill="#444" transform="rotate(-45 1851 175)">Front</text>
<text x="1828" y="142" text-anchor="middle" font-family="Liberation Sans" font-size="9" fill="#444" transform="rotate(-30 1828 139)">Top</text>
<path d="M1841,212 v-50" stroke="#5b5be0" stroke-width="1.5"/><text x="1837" y="157.5" font-family="Liberation Sans" font-size="11" fill="#6a6ae8">Z</text>
<path d="M1841,212 l-50,-14" stroke="#3cbf3c" stroke-width="1.5"/><text x="1776.5" y="200" font-family="Liberation Sans" font-size="11" fill="#2aa52a">Y</text>
<path d="M1841,212 l29,-24" stroke="#e04040" stroke-width="1.5"/><text x="1871.5" y="187" font-family="Liberation Sans" font-size="11" fill="#d93030">X</text>
<path d="M1866,226 l8,-4 l9,3 v8 l-8,5 l-9,-4 z" fill="#ddd" stroke="#333" stroke-width="1.1"/><path d="M1866,226 l9,4 l8,-5 M1875,230 v8" fill="none" stroke="#333" stroke-width="1"/><path d="M1866,226 l9,4 v8 l-9,-4 z" fill="#999"/>
<polygon points="1892,230 1898,230 1895,234" fill="#222"/>
<rect x="40" y="1050" width="34" height="29" fill="#d9d9d9"/><path d="M56.5,1057 v15 M49,1064.5 h15" stroke="#666" stroke-width="2.2"/>
<path d="M74,1050 h35 l7,13 l-7,16 h-35 z" fill="#e6e6e6"/><path d="M83,1063 l9,-8 l4,3.5 v-3.5 h3 v6 l2,2 h-2.5 v8 h-4.5 v-5 h-4 v5 h-4.5 v-8 z" fill="#666"/>
<path d="M110,1050 h117 l7,13 l-7,16 h-117 l7,-16 z" fill="#fafafa"/>
<path d="M126.5,1055.5 h5 l1.5,2 h10.5 v11 h-17 z" fill="none" stroke="#333" stroke-width="1.1"/>
<path d="M235,1050 h202 v26 h-200 l-3,-3 l3,-10 z" fill="#e9e9e9"/>
<circle cx="256" cy="1063" r="6.5" fill="#7ba3e6"/><circle cx="256" cy="1061" r="1.3" fill="#fff"/><rect x="255" y="1063" width="2" height="4" fill="#fff"/>
<g transform="translate(267,1054)" fill="none" stroke="#333" stroke-width="1.1"><rect x="0.5" y="2.5" width="14" height="14" rx="1"/><path d="M0.5,2.5 l3,-2 h13 v14 l-2,2"/><rect x="3" y="5" width="9" height="8" fill="#999" stroke="none"/></g>
<rect x="438" y="1050" width="200" height="29" fill="#fff"/><rect x="440" y="1075" width="196" height="2.5" fill="#1c56b0"/>
<g transform="translate(450,1054)" fill="none" stroke="#333" stroke-width="1.1"><path d="M0.5,5 l3,-2 h2 v14 h-5 z M5.5,3 l2,-2 h5 l1.5,1.5 v15 h-8.5 z M8,1 v16"/></g>
<g fill="none" stroke="#222" stroke-width="1.3"><ellipse cx="1833" cy="1035" rx="4.5" ry="2.5"/><path d="M1822.5,1036.5 h10 M1822.5,1041 h12 q3,0 3,-4 v-3 M1822.5,1036.5 v4.5"/></g>
<g fill="none" stroke="#222" stroke-width="1.4"><path d="M1855.8,1043 a9.9,12.5 0 0 1 19.8,0 z"/><path d="M1859.8,1042 q0,-6.5 5.9,-6.5 q5.9,0 5.9,6.5" stroke-width="1.1"/></g>
<g fill="#222"><rect x="1893" y="1029" width="14" height="1.5"/><rect x="1899.5" y="1029" width="1.2" height="12"/><path d="M1894,1030 l-1.5,7 h3 z M1906,1030 l-1.5,7 h3 z"/><rect x="1893" y="1041" width="14" height="1.5"/><rect x="1892.5" y="1037" width="3.5" height="1.2"/><rect x="1904.5" y="1037" width="3.5" height="1.2"/></g></svg>
<div class="t" style="left:150px;top:1057px;font-size:13.6px;color:#555">Exercise 3</div>
<div class="t" style="left:289px;top:1057px;font-size:13.8px;color:#666">Exercise 3 Assembly</div>
<div class="t" style="left:471px;top:1057px;font-size:13.6px;color:#333">Exercise 3 Part Studio</div>
<div class="t" style="left:145px;top:51px;font-size:15px;color:#333;letter-spacing:-0.6px">Sketch</div>
<div class="t" style="left:1743px;top:51px;font-size:13.6px;color:#333">Search tools...</div>
<div class="t" style="left:1836px;top:54px;font-size:11px;color:#444">alt/⌥</div>
<div class="t" style="left:1871px;top:54px;font-size:11px;color:#444">c</div>

<!-- header texts -->
<div class="t" style="left:31px;top:10px;font-size:18px;color:#6d6d6d">onshape</div>
<div class="t" style="left:140px;top:11.5px;font-size:22px;font-weight:bold;color:#2b2b2b;letter-spacing:-0.25px">1B - Practice Exercise Solutions</div>
<div class="t" style="left:475px;top:15px;font-size:15.4px;color:#8c8c8c">FRCDesignLib Rework</div>
<div class="t" style="left:693px;top:14px;font-size:15px;color:#8c8c8c">Stage 1</div>
<div class="t" style="left:876px;top:13px;font-size:14.5px;color:#333">225</div>
<div class="t" style="left:938px;top:13px;font-size:14.5px;color:#333">5280</div>
<div class="t" style="left:1009px;top:13px;font-size:14.5px;color:#333">4</div>
<div class="a" style="left:1673px;top:3px;width:58px;height:33px;background:#1c5ab6;border-radius:5px"></div>
<div class="t" style="left:1684px;top:12px;font-size:14.5px;color:#fff">Share</div>
<div class="t" style="left:1818px;top:13px;font-size:14px;color:#333">Andrew Card</div>


<!-- feature panel -->
<div class="a" style="left:79px;top:84px;width:158px;height:29px;border:1px solid #c4c4c4;border-radius:4px;background:#fff"></div>
<div class="t it" style="left:86px;top:94px;font-size:12.7px;color:#8a8a8a">Filter by name or type</div>
<div class="t" style="left:44px;top:123px;font-size:13.3px;color:#333">Features (24)</div>
<div class="a" style="left:64px;top:492.5px;width:171px;height:6px;background:#ababab"></div>
<div class="a" style="left:40px;top:706px;width:200px;height:1px;background:#d9d9d9"></div>
<div class="fi " style="left:63px;top:150.5px">Default geometry</div>
<div class="fi " style="left:85px;top:176.5px">Origin</div>
<div class="fi g" style="left:85px;top:202.5px">Top</div>
<div class="fi g" style="left:85px;top:228.5px">Front</div>
<div class="fi g" style="left:85px;top:254.5px">Right</div>
<div class="fi g" style="left:86px;top:280.5px">Origin Cube</div>
<div class="fi " style="left:86px;top:306.5px">Frame (5)</div>
<div class="fi g" style="left:66px;top:332.5px">Gearbox Layout</div>
<div class="fi " style="left:86px;top:358.5px">GB Plates (6)</div>
<div class="fi g" style="left:85px;top:384.5px">Plate Sketch</div>
<div class="fi " style="left:85px;top:410.5px">Plate Extrude</div>
<div class="fi g" style="left:85px;top:436.5px">Inner plate</div>
<div class="fi " style="left:85px;top:462.5px">Inner Plate</div>
<div class="fi g it" style="left:86px;top:514.5px">Fillet Plate</div>
<div class="fi g it" style="left:86px;top:540.5px">Gearbox Spacer</div>
<div class="fi g it" style="left:66px;top:566.5px">Main Belt</div>
<div class="fi g it" style="left:66px;top:592.5px">Inter Shaft</div>
<div class="fi g it" style="left:66px;top:618.5px">Output Shaft</div>
<div class="fi g it" style="left:86px;top:644.5px">Pocketing (4)</div>
<div class="fi " style="left:63px;top:714.5px">Parts (7)</div>
<div class="fi g" style="left:85px;top:740.5px">Origin Cube</div>
<div class="fi " style="left:85px;top:766.5px">Tube 1&quot;x1&quot;x7&quot;</div>
<div class="fi " style="left:85px;top:792.5px">Tube 1&quot;x1&quot;x7&quot;</div>
<div class="fi " style="left:85px;top:818.5px">Tube 1&quot;x1&quot;x8&quot;</div>
<div class="fi " style="left:85px;top:844.5px">Part 5</div>
<div class="fi " style="left:85px;top:870.5px">Motor Plate</div>
<div class="fi " style="left:85px;top:896.5px">Inner Plate</div>
</body></html>
